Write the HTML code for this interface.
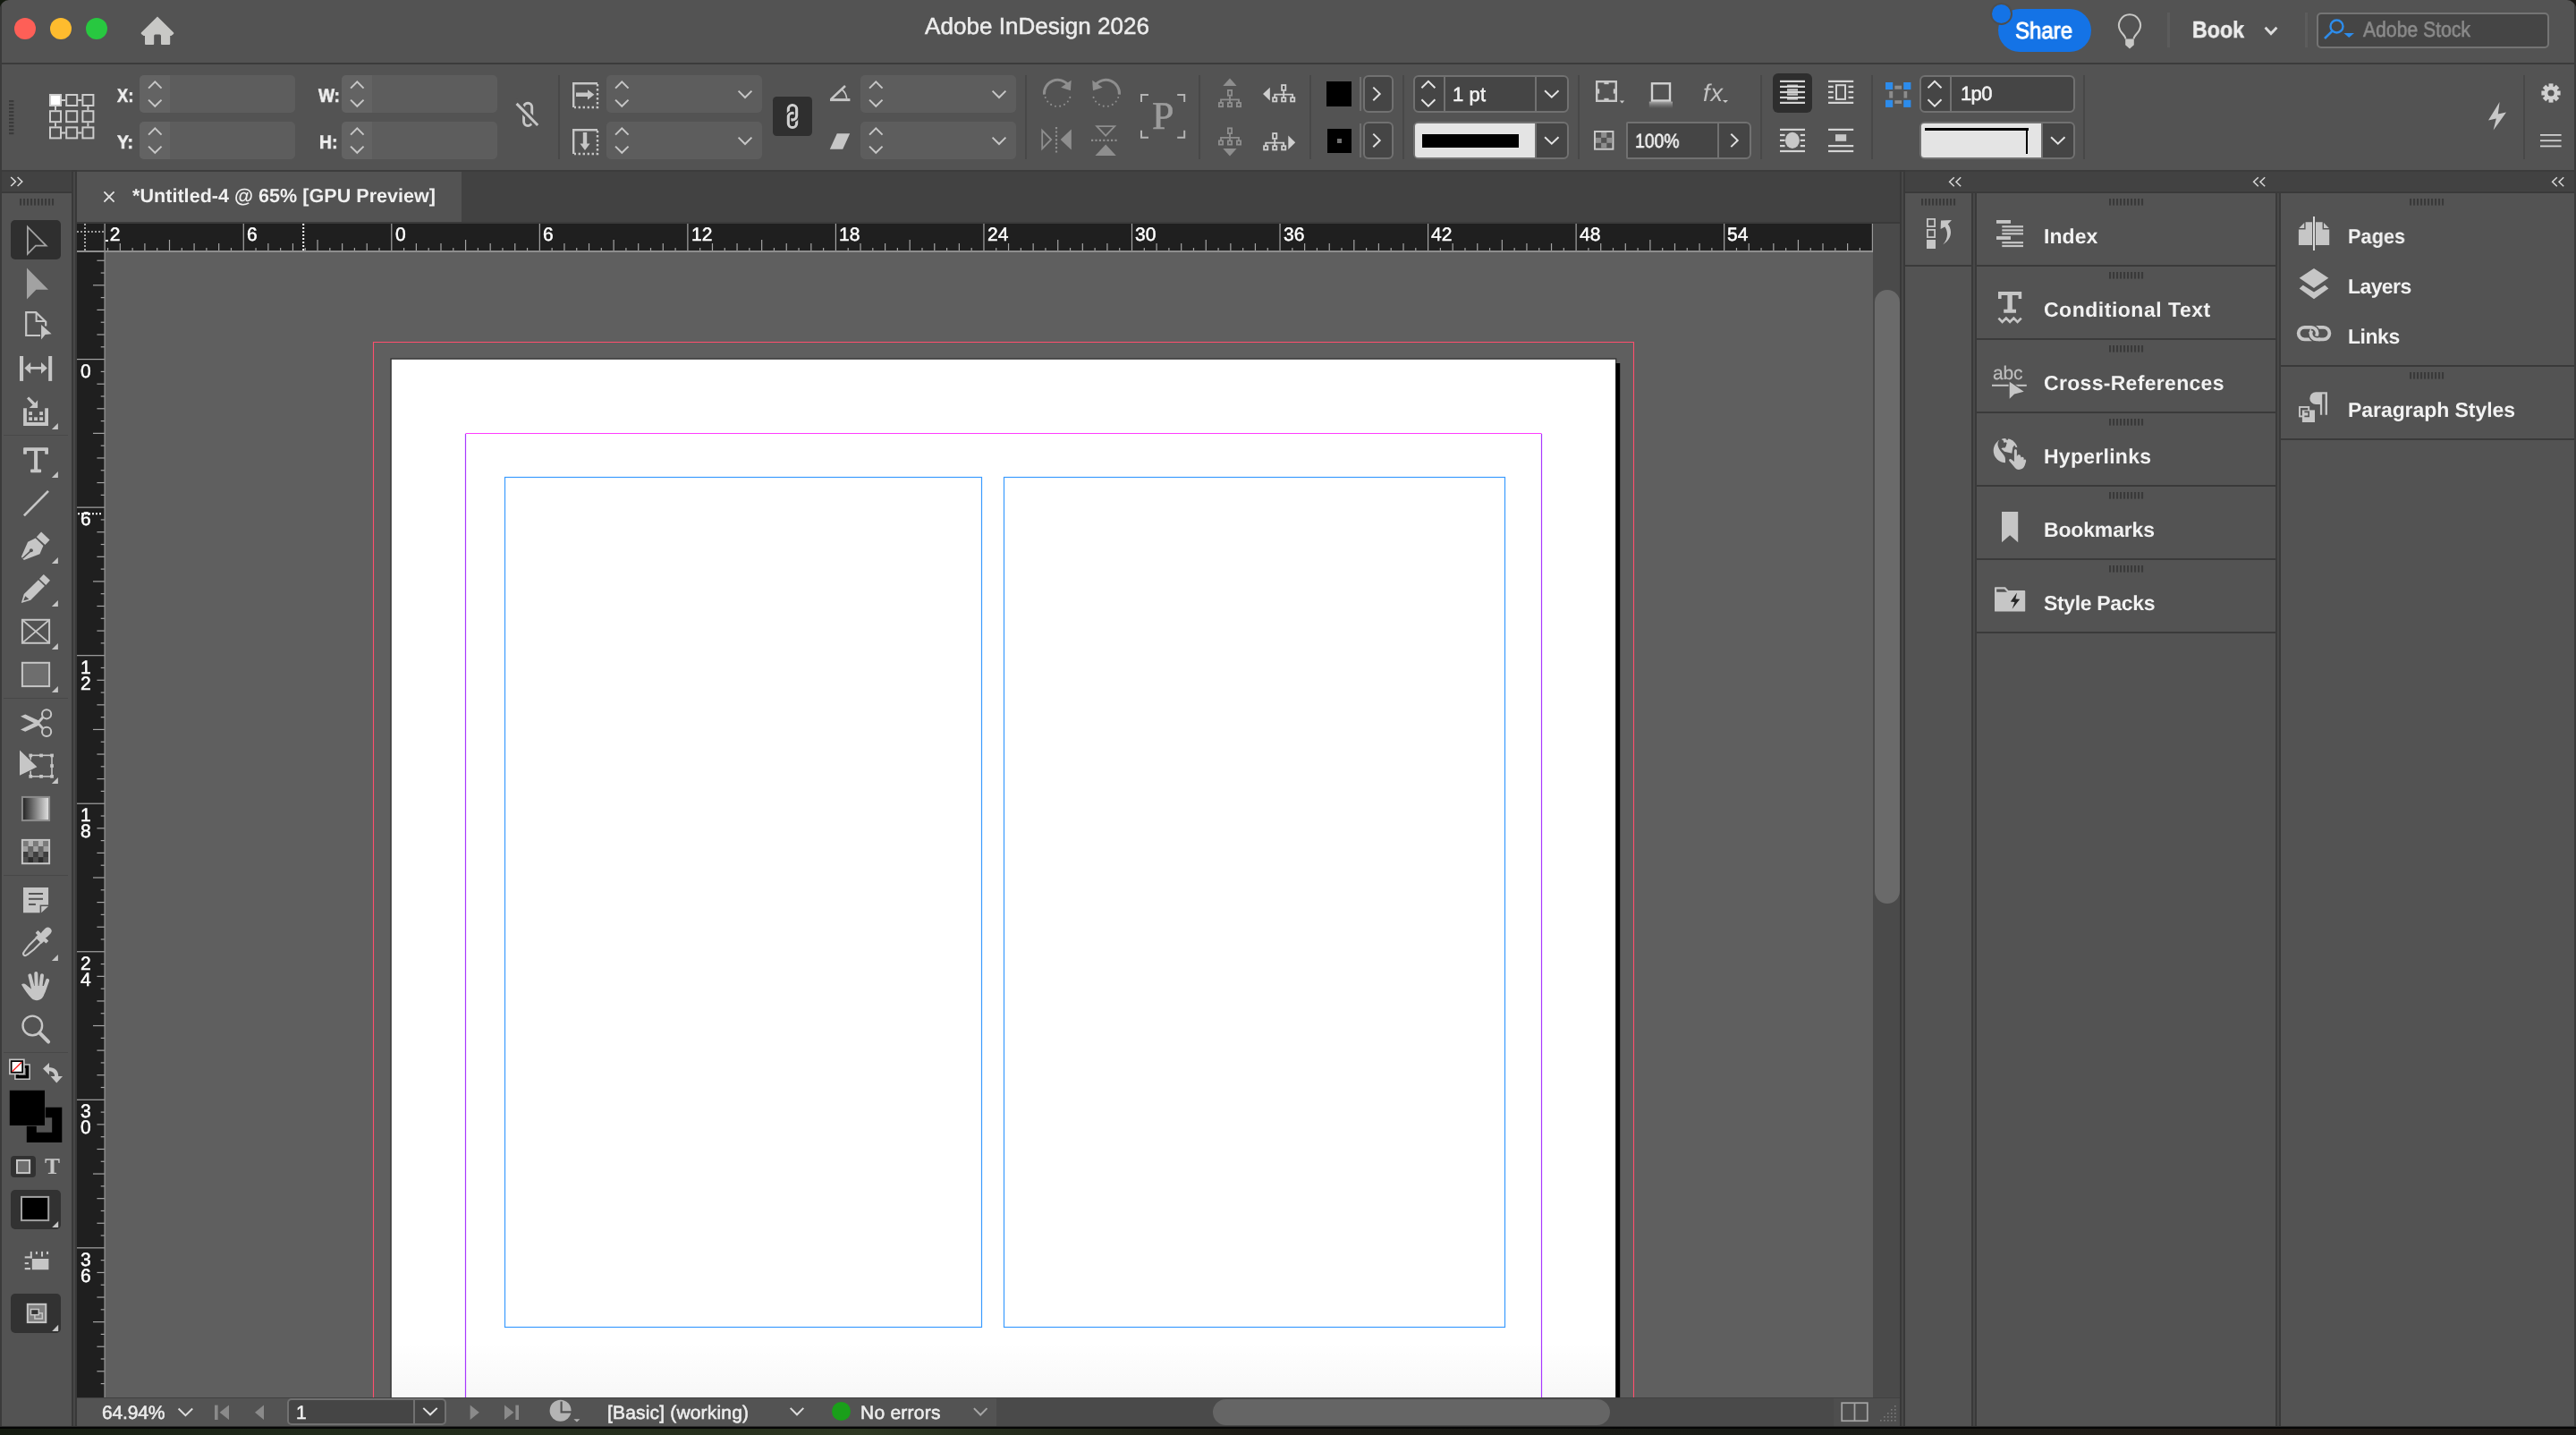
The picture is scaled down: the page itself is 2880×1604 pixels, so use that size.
<!DOCTYPE html>
<html lang="en"><head><meta charset="utf-8"><title>Adobe InDesign 2026</title>
<style>
html,body{margin:0;padding:0;}
body{width:2880px;height:1604px;overflow:hidden;background:linear-gradient(90deg,#141a10 0,#202a1a 350px,#262f1c 800px,#2e3822 960px,#252d1c 1100px,#1b1914 1400px,#171a15 2000px,#221c17 2500px,#1a1815 2880px);font-family:"Liberation Sans",sans-serif;position:relative;}
#win{position:absolute;left:0;top:0;width:2880px;height:1595px;background:#535353;border-radius:10px 10px 0 0;overflow:hidden;}
#win div,#win svg{position:absolute;box-sizing:border-box;}
#win svg{overflow:visible;}
.t{font-family:"Liberation Sans",sans-serif;will-change:transform;text-rendering:geometricPrecision;-webkit-text-stroke:0.55px;}
</style></head><body><div id="win">

<!-- title bar -->
<div style="left:0px;top:70px;width:2880px;height:2px;background:#3b3b3b;"></div>
<div style="left:15.7px;top:19.7px;width:24.6px;height:24.6px;background:#fe5f57;border-radius:50%;"></div>
<div style="left:55.7px;top:19.7px;width:24.6px;height:24.6px;background:#febc2e;border-radius:50%;"></div>
<div style="left:95.7px;top:19.7px;width:24.6px;height:24.6px;background:#28c840;border-radius:50%;"></div>
<svg style="left:150px;top:10px;" width="50" height="46" viewBox="0 0 50 46"><path d="M26 8.6 L44.2 26.6 Q44.6 27.3 44 27.9 L41.4 30 L40.2 30 L40.2 39 Q40.2 40 39.2 40 L31 40 Q30 40 30 39 L30 30 Q30 28.4 28.6 28.4 L23.6 28.4 Q22.2 28.4 22.2 30 L22.2 39 Q22.2 40 21.2 40 L13 40 Q12 40 12 39 L12 30 L10.6 30 L8 27.9 Q7.4 27.3 7.8 26.6 Z" fill="#c8c8c6"/></svg>
<div class="t" style="left:1034px;top:15.8px;font-size:26px;line-height:26px;color:#ececec;white-space:nowrap;letter-spacing:0.05px;-webkit-text-stroke:0.5px;">Adobe InDesign 2026</div>
<div style="left:2234px;top:10px;width:104px;height:48px;background:#1473e6;border-radius:24px;"></div>
<div style="left:2224.6px;top:2.8px;width:25px;height:25px;background:#1473e6;border-radius:50%;border:2.2px solid #4e4e4e;"></div>
<div class="t" style="left:2253.4px;top:21.2px;font-size:26px;line-height:26px;color:#ffffff;white-space:nowrap;transform:scaleX(0.9224);transform-origin:0 0;-webkit-text-stroke:0.9px;">Share</div>
<svg style="left:2364px;top:12px;" width="34" height="46" viewBox="0 0 34 46"><path d="M12.4 31.6 C12.4 28 8 25.6 6.2 21.6 A12 12 0 1 1 27.8 21.6 C26 25.6 21.6 28 21.6 31.6" fill="none" stroke="#c8c8c6" stroke-width="2"/><path d="M12.2 31.6 L21.8 31.6 L21.8 38.2 L17 42.4 L12.2 38.2 Z" fill="#c8c8c6"/></svg>
<div style="left:2422.5px;top:14px;width:3px;height:39px;background:#5c5c5c;"></div>
<div class="t" style="left:2450.5px;top:19.7px;font-size:26px;line-height:26px;color:#ececec;white-space:nowrap;font-weight:bold;transform:scaleX(0.8923);transform-origin:0 0;">Book</div>
<svg style="left:2529px;top:22px;" width="22" height="20" viewBox="0 0 22 20"><path d="M3.6 8.8 L10 15.6 L16.4 8.8" fill="none" stroke="#dcdcdc" stroke-width="2.9"/></svg>
<div style="left:2576.5px;top:14px;width:3px;height:39px;background:#5c5c5c;"></div>
<div style="left:2590px;top:14px;width:260px;height:39.5px;background:#454545;border:2px solid #747474;border-radius:5px;"></div>
<svg style="left:2596px;top:18px;" width="40" height="32" viewBox="0 0 40 32"><circle cx="16.5" cy="11.5" r="7" fill="none" stroke="#2d8ceb" stroke-width="2.4"/><path d="M11.6 16.6 L3 25" stroke="#2d8ceb" stroke-width="2.6" fill="none"/><path d="M24.5 19 L36 19 L30.2 24 Z" fill="#2d8ceb"/></svg>
<div class="t" style="left:2642px;top:21.9px;font-size:24px;line-height:24px;color:#8c8c8c;white-space:nowrap;transform:scaleX(0.8818);transform-origin:0 0;">Adobe Stock</div>
<!-- control bar -->
<div style="left:0px;top:190px;width:2880px;height:24px;background:#424242;"></div>
<svg style="left:10px;top:111.6px;" width="6" height="40" viewBox="0 0 6 40"><rect x="0" y="0" width="5.4" height="2.2" fill="#3a3a3a"/><rect x="0" y="4" width="5.4" height="2.2" fill="#3a3a3a"/><rect x="0" y="8" width="5.4" height="2.2" fill="#3a3a3a"/><rect x="0" y="12" width="5.4" height="2.2" fill="#3a3a3a"/><rect x="0" y="16" width="5.4" height="2.2" fill="#3a3a3a"/><rect x="0" y="20" width="5.4" height="2.2" fill="#3a3a3a"/><rect x="0" y="24" width="5.4" height="2.2" fill="#3a3a3a"/><rect x="0" y="28" width="5.4" height="2.2" fill="#3a3a3a"/><rect x="0" y="32" width="5.4" height="2.2" fill="#3a3a3a"/><rect x="0" y="36" width="5.4" height="2.2" fill="#3a3a3a"/></svg>
<svg style="left:54.8px;top:105px;" width="51" height="51" viewBox="0 0 51 51"><rect x="1.0" y="1.0" width="12" height="12" fill="#ffffff" stroke="#cdcdcd" stroke-width="2"/><rect x="19.2" y="1.0" width="12" height="12" fill="none" stroke="#cdcdcd" stroke-width="2"/><rect x="37.4" y="1.0" width="12" height="12" fill="none" stroke="#cdcdcd" stroke-width="2"/><rect x="1.0" y="19.2" width="12" height="12" fill="none" stroke="#cdcdcd" stroke-width="2"/><rect x="19.2" y="19.2" width="12" height="12" fill="none" stroke="#cdcdcd" stroke-width="2"/><rect x="37.4" y="19.2" width="12" height="12" fill="none" stroke="#cdcdcd" stroke-width="2"/><rect x="1.0" y="37.4" width="12" height="12" fill="none" stroke="#cdcdcd" stroke-width="2"/><rect x="19.2" y="37.4" width="12" height="12" fill="none" stroke="#cdcdcd" stroke-width="2"/><rect x="37.4" y="37.4" width="12" height="12" fill="none" stroke="#cdcdcd" stroke-width="2"/><path d="M14 7 L18.2 7" stroke="#cdcdcd" stroke-width="2"/><path d="M32.2 7 L36.4 7" stroke="#cdcdcd" stroke-width="2"/><path d="M14 43.4 L18.2 43.4" stroke="#cdcdcd" stroke-width="2"/><path d="M32.2 43.4 L36.4 43.4" stroke="#cdcdcd" stroke-width="2"/><path d="M7 14 L7 18.2" stroke="#cdcdcd" stroke-width="2"/><path d="M7 32.2 L7 36.4" stroke="#cdcdcd" stroke-width="2"/><path d="M43.4 14 L43.4 18.2" stroke="#cdcdcd" stroke-width="2"/><path d="M43.4 32.2 L43.4 36.4" stroke="#cdcdcd" stroke-width="2"/></svg>
<div class="t" style="left:130.5px;top:96.5px;font-size:21.2px;line-height:21.2px;color:#f0f0f0;white-space:nowrap;font-weight:bold;transform:scaleX(0.8585);transform-origin:0 0;">X:</div>
<div class="t" style="left:130.5px;top:149.2px;font-size:21.2px;line-height:21.2px;color:#f0f0f0;white-space:nowrap;font-weight:bold;transform:scaleX(0.9172);transform-origin:0 0;">Y:</div>
<div style="left:156px;top:84px;width:174px;height:42px;background:#5d5d5d;border-radius:5px;"></div>
<div style="left:156px;top:84px;width:34px;height:42px;background:#636363;border-radius:5px 0 0 5px;"></div>
<svg style="left:156px;top:84px;" width="174" height="42" viewBox="0 0 174 42"><path d="M10.05 14.6 L17.3 7.4 L24.55 14.6" fill="none" stroke="#c6c6c6" stroke-width="2"/><path d="M10.05 27.599999999999998 L17.3 34.8 L24.55 27.599999999999998" fill="none" stroke="#c6c6c6" stroke-width="2"/></svg>
<div style="left:156px;top:136px;width:174px;height:42px;background:#5d5d5d;border-radius:5px;"></div>
<div style="left:156px;top:136px;width:34px;height:42px;background:#636363;border-radius:5px 0 0 5px;"></div>
<svg style="left:156px;top:136px;" width="174" height="42" viewBox="0 0 174 42"><path d="M10.05 14.6 L17.3 7.4 L24.55 14.6" fill="none" stroke="#c6c6c6" stroke-width="2"/><path d="M10.05 27.599999999999998 L17.3 34.8 L24.55 27.599999999999998" fill="none" stroke="#c6c6c6" stroke-width="2"/></svg>
<div class="t" style="left:355.5px;top:96.5px;font-size:21.2px;line-height:21.2px;color:#f0f0f0;white-space:nowrap;font-weight:bold;transform:scaleX(0.8994);transform-origin:0 0;">W:</div>
<div class="t" style="left:357px;top:149.2px;font-size:21.2px;line-height:21.2px;color:#f0f0f0;white-space:nowrap;font-weight:bold;transform:scaleX(0.9121);transform-origin:0 0;">H:</div>
<div style="left:382px;top:84px;width:174px;height:42px;background:#5d5d5d;border-radius:5px;"></div>
<div style="left:382px;top:84px;width:34px;height:42px;background:#636363;border-radius:5px 0 0 5px;"></div>
<svg style="left:382px;top:84px;" width="174" height="42" viewBox="0 0 174 42"><path d="M10.05 14.6 L17.3 7.4 L24.55 14.6" fill="none" stroke="#c6c6c6" stroke-width="2"/><path d="M10.05 27.599999999999998 L17.3 34.8 L24.55 27.599999999999998" fill="none" stroke="#c6c6c6" stroke-width="2"/></svg>
<div style="left:382px;top:136px;width:174px;height:42px;background:#5d5d5d;border-radius:5px;"></div>
<div style="left:382px;top:136px;width:34px;height:42px;background:#636363;border-radius:5px 0 0 5px;"></div>
<svg style="left:382px;top:136px;" width="174" height="42" viewBox="0 0 174 42"><path d="M10.05 14.6 L17.3 7.4 L24.55 14.6" fill="none" stroke="#c6c6c6" stroke-width="2"/><path d="M10.05 27.599999999999998 L17.3 34.8 L24.55 27.599999999999998" fill="none" stroke="#c6c6c6" stroke-width="2"/></svg>
<svg style="left:572px;top:108px;" width="36" height="40" viewBox="0 0 36 40"><rect x="13.6" y="7.2" width="9.1" height="25.4" rx="4.55" fill="none" stroke="#c6c6c6" stroke-width="2.9"/><path d="M3 5.2 L31 33.8" stroke="#535353" stroke-width="7.8"/><path d="M5.6 7.9 L29.2 32" stroke="#c6c6c6" stroke-width="3"/></svg>
<div style="left:623.5px;top:84px;width:2px;height:94px;background:#484848;"></div>
<svg style="left:638px;top:90px;" width="34" height="34" viewBox="0 0 34 34"><path d="M3.2 30 L3.2 3.2 L30 3.2" fill="none" stroke="#c6c6c6" stroke-width="2.4"/><path d="M30 4 L30 30 L4 30" fill="none" stroke="#c6c6c6" stroke-width="2.4" stroke-dasharray="2.4 2.6"/><path d="M6 13.6 L19 13.6 L19 10.2 L26.4 15.8 L19 21.4 L19 18 L6 18 Z" fill="#c6c6c6"/></svg>
<svg style="left:638px;top:142px;" width="34" height="34" viewBox="0 0 34 34"><path d="M3.2 30 L3.2 3.2 L30 3.2" fill="none" stroke="#c6c6c6" stroke-width="2.4"/><path d="M30 4 L30 30 L4 30" fill="none" stroke="#c6c6c6" stroke-width="2.4" stroke-dasharray="2.4 2.6"/><path d="M13.8 6 L13.8 18.6 L10.4 18.6 L16 26 L21.6 18.6 L18.2 18.6 L18.2 6 Z" fill="#c6c6c6"/></svg>
<div style="left:678px;top:84px;width:174px;height:42px;background:#5d5d5d;border-radius:5px;"></div>
<svg style="left:678px;top:84px;" width="174" height="42" viewBox="0 0 174 42"><path d="M10.05 14.6 L17.3 7.4 L24.55 14.6" fill="none" stroke="#c6c6c6" stroke-width="2"/><path d="M10.05 27.599999999999998 L17.3 34.8 L24.55 27.599999999999998" fill="none" stroke="#c6c6c6" stroke-width="2"/><path d="M147.6 17.6 L155 25.0 L162.4 17.6" fill="none" stroke="#c6c6c6" stroke-width="2"/></svg>
<div style="left:678px;top:136px;width:174px;height:42px;background:#5d5d5d;border-radius:5px;"></div>
<svg style="left:678px;top:136px;" width="174" height="42" viewBox="0 0 174 42"><path d="M10.05 14.6 L17.3 7.4 L24.55 14.6" fill="none" stroke="#c6c6c6" stroke-width="2"/><path d="M10.05 27.599999999999998 L17.3 34.8 L24.55 27.599999999999998" fill="none" stroke="#c6c6c6" stroke-width="2"/><path d="M147.6 17.6 L155 25.0 L162.4 17.6" fill="none" stroke="#c6c6c6" stroke-width="2"/></svg>
<div style="left:864px;top:107.9px;width:44px;height:44.1px;background:#2f2f2f;border-radius:4.5px;"></div>
<svg style="left:864px;top:108px;" width="44" height="44" viewBox="0 0 44 44"><rect x="17.35" y="9.45" width="9.3" height="16.5" rx="4.65" fill="none" stroke="#d0d0d0" stroke-width="3.1"/><rect x="17.35" y="18.25" width="9.3" height="16.3" rx="4.65" fill="none" stroke="#2f2f2f" stroke-width="6"/><rect x="17.35" y="18.25" width="9.3" height="16.3" rx="4.65" fill="none" stroke="#d0d0d0" stroke-width="3.1"/><path d="M22 9.45 A4.65 4.65 0 0 1 26.65 14.1 L26.65 21.3 A4.65 4.65 0 0 1 22 25.95" fill="none" stroke="#2f2f2f" stroke-width="6"/><path d="M21 9.45 L22 9.45 A4.65 4.65 0 0 1 26.65 14.1 L26.65 21.3 A4.65 4.65 0 0 1 22 25.95 L21 25.95" fill="none" stroke="#d0d0d0" stroke-width="3.1"/></svg>
<svg style="left:926px;top:92px;" width="28" height="24" viewBox="0 0 28 24"><path d="M2 19.6 L24.4 19.6" stroke="#c6c6c6" stroke-width="3"/><path d="M3.4 18.6 L19 4" stroke="#c6c6c6" stroke-width="2.6"/><path d="M15.6 8.4 A14 14 0 0 1 20.6 18" fill="none" stroke="#c6c6c6" stroke-width="1.6"/></svg>
<svg style="left:926px;top:147px;" width="28" height="22" viewBox="0 0 28 22"><path d="M9.8 2.2 L24.2 2.2 L16.2 19.8 L1.8 19.8 Z" fill="#c6c6c6"/></svg>
<div style="left:962px;top:84px;width:174px;height:42px;background:#5d5d5d;border-radius:5px;"></div>
<svg style="left:962px;top:84px;" width="174" height="42" viewBox="0 0 174 42"><path d="M10.05 14.6 L17.3 7.4 L24.55 14.6" fill="none" stroke="#c6c6c6" stroke-width="2"/><path d="M10.05 27.599999999999998 L17.3 34.8 L24.55 27.599999999999998" fill="none" stroke="#c6c6c6" stroke-width="2"/><path d="M147.6 17.6 L155 25.0 L162.4 17.6" fill="none" stroke="#c6c6c6" stroke-width="2"/></svg>
<div style="left:962px;top:136px;width:174px;height:42px;background:#5d5d5d;border-radius:5px;"></div>
<svg style="left:962px;top:136px;" width="174" height="42" viewBox="0 0 174 42"><path d="M10.05 14.6 L17.3 7.4 L24.55 14.6" fill="none" stroke="#c6c6c6" stroke-width="2"/><path d="M10.05 27.599999999999998 L17.3 34.8 L24.55 27.599999999999998" fill="none" stroke="#c6c6c6" stroke-width="2"/><path d="M147.6 17.6 L155 25.0 L162.4 17.6" fill="none" stroke="#c6c6c6" stroke-width="2"/></svg>
<div style="left:1146px;top:84px;width:2px;height:94px;background:#484848;"></div>
<svg style="left:1160px;top:84px;" width="100" height="96" viewBox="0 0 100 96"><path d="M7.46 21.72 A15.1 15.1 0 0 1 34.40 11.10" fill="none" stroke="#8e8e8e" stroke-width="3"/><path d="M26.20 13.80 L37.70 5.80 L36.90 17.20 Z" fill="#8e8e8e"/><circle cx="36.29" cy="24.88" r="1.05" fill="#8e8e8e"/><circle cx="33.85" cy="29.43" r="1.05" fill="#8e8e8e"/><circle cx="29.97" cy="32.83" r="1.05" fill="#8e8e8e"/><circle cx="25.14" cy="34.66" r="1.05" fill="#8e8e8e"/><circle cx="19.98" cy="34.68" r="1.05" fill="#8e8e8e"/><circle cx="15.14" cy="32.89" r="1.05" fill="#8e8e8e"/><circle cx="11.23" cy="29.53" r="1.05" fill="#8e8e8e"/><circle cx="8.75" cy="25.00" r="1.05" fill="#8e8e8e"/><g transform="translate(152.8 0) scale(-1 1)"><path d="M61.36 21.72 A15.1 15.1 0 0 1 88.30 11.10" fill="none" stroke="#8e8e8e" stroke-width="3"/><path d="M80.10 13.80 L91.60 5.80 L90.80 17.20 Z" fill="#8e8e8e"/><circle cx="90.19" cy="24.88" r="1.05" fill="#8e8e8e"/><circle cx="87.75" cy="29.43" r="1.05" fill="#8e8e8e"/><circle cx="83.87" cy="32.83" r="1.05" fill="#8e8e8e"/><circle cx="79.04" cy="34.66" r="1.05" fill="#8e8e8e"/><circle cx="73.88" cy="34.68" r="1.05" fill="#8e8e8e"/><circle cx="69.04" cy="32.89" r="1.05" fill="#8e8e8e"/><circle cx="65.13" cy="29.53" r="1.05" fill="#8e8e8e"/><circle cx="62.65" cy="25.00" r="1.05" fill="#8e8e8e"/></g><path d="M5.2 61.8 L5.2 82.2 L15.2 72 Z" fill="none" stroke="#8e8e8e" stroke-width="1.8"/><path d="M21 58 L21 88" stroke="#8e8e8e" stroke-width="2.2" stroke-dasharray="2.2 2.2"/><path d="M37.8 60.6 L37.8 83.4 L25.6 72 Z" fill="#8e8e8e"/><path d="M66.2 57.2 L86.2 57.2 L76.2 67.6 Z" fill="none" stroke="#8e8e8e" stroke-width="1.8"/><path d="M60 72.9 L90.4 72.9" stroke="#8e8e8e" stroke-width="2.2" stroke-dasharray="2.2 2.2"/><path d="M64.4 90 L87.8 90 L76.2 77.6 Z" fill="#8e8e8e"/></svg>
<svg style="left:1274.8px;top:105.2px;" width="51" height="51" viewBox="0 0 51 51"><path d="M1 9 L1 1 L9 1" fill="none" stroke="#b4b4b4" stroke-width="2"/><path d="M49.2 9 L49.2 1 L41.2 1" fill="none" stroke="#b4b4b4" stroke-width="2"/><path d="M1 40.8 L1 48.8 L9 48.8" fill="none" stroke="#b4b4b4" stroke-width="2"/><path d="M49.2 40.8 L49.2 48.8 L41.2 48.8" fill="none" stroke="#b4b4b4" stroke-width="2"/></svg>
<div class="t" style="left:1288.2px;top:107.5px;font-size:44px;line-height:44px;color:#9c9c9c;white-space:nowrap;font-family:'Liberation Serif',serif;">P</div>
<div style="left:1340px;top:84px;width:2px;height:94px;background:#484848;"></div>
<svg style="left:1355px;top:84px;" width="110" height="96" viewBox="0 0 110 96"><path d="M12.3 12 L27.6 12 L20 3.6 Z" fill="#8e8e8e"/><rect x="17.9" y="16.9" width="4.2" height="5.8" fill="none" stroke="#8e8e8e" stroke-width="1.8"/><path d="M20 23.6 L20 27.4 M10 31 L10 27.4 L30 27.4 L30 31 M20 27.4 L20 31" fill="none" stroke="#8e8e8e" stroke-width="1.8"/><rect x="7.9" y="31" width="4.2" height="4.2" fill="none" stroke="#8e8e8e" stroke-width="1.8"/><rect x="17.9" y="31" width="4.2" height="4.2" fill="none" stroke="#8e8e8e" stroke-width="1.8"/><rect x="27.9" y="31" width="4.2" height="4.2" fill="none" stroke="#8e8e8e" stroke-width="1.8"/><rect x="17.9" y="59.3" width="4.2" height="5.8" fill="none" stroke="#8e8e8e" stroke-width="1.8"/><path d="M20 66.0 L20 69.8 M10 73.4 L10 69.8 L30 69.8 L30 73.4 M20 69.8 L20 73.4" fill="none" stroke="#8e8e8e" stroke-width="1.8"/><rect x="7.9" y="73.4" width="4.2" height="4.2" fill="none" stroke="#8e8e8e" stroke-width="1.8"/><rect x="17.9" y="73.4" width="4.2" height="4.2" fill="none" stroke="#8e8e8e" stroke-width="1.8"/><rect x="27.9" y="73.4" width="4.2" height="4.2" fill="none" stroke="#8e8e8e" stroke-width="1.8"/><path d="M12.3 82 L27.6 82 L20 90.4 Z" fill="#8e8e8e"/><path d="M64.8 13.8 L64.8 28.4 L57 21.1 Z" fill="#cfcfcf"/><rect x="78.10000000000001" y="11.1" width="4.2" height="5.8" fill="none" stroke="#cfcfcf" stroke-width="1.8"/><path d="M80.2 17.799999999999997 L80.2 21.6 M70.2 25.2 L70.2 21.6 L90.2 21.6 L90.2 25.2 M80.2 21.6 L80.2 25.2" fill="none" stroke="#cfcfcf" stroke-width="1.8"/><rect x="68.10000000000001" y="25.2" width="4.2" height="4.2" fill="none" stroke="#cfcfcf" stroke-width="1.8"/><rect x="78.10000000000001" y="25.2" width="4.2" height="4.2" fill="none" stroke="#cfcfcf" stroke-width="1.8"/><rect x="88.10000000000001" y="25.2" width="4.2" height="4.2" fill="none" stroke="#cfcfcf" stroke-width="1.8"/><rect x="68.10000000000001" y="65.10000000000001" width="4.2" height="5.8" fill="none" stroke="#cfcfcf" stroke-width="1.8"/><path d="M70.2 71.8 L70.2 75.60000000000001 M60.2 79.2 L60.2 75.60000000000001 L80.2 75.60000000000001 L80.2 79.2 M70.2 75.60000000000001 L70.2 79.2" fill="none" stroke="#cfcfcf" stroke-width="1.8"/><rect x="58.1" y="79.2" width="4.2" height="4.2" fill="none" stroke="#cfcfcf" stroke-width="1.8"/><rect x="68.10000000000001" y="79.2" width="4.2" height="4.2" fill="none" stroke="#cfcfcf" stroke-width="1.8"/><rect x="78.10000000000001" y="79.2" width="4.2" height="4.2" fill="none" stroke="#cfcfcf" stroke-width="1.8"/><path d="M85.3 67.4 L85.3 83 L93.2 75.2 Z" fill="#cfcfcf"/></svg>
<div style="left:1464px;top:84px;width:2px;height:94px;background:#484848;"></div>
<div style="left:1482.8px;top:90.9px;width:28.2px;height:28px;background:#000;"></div>
<div style="left:1483.8px;top:144px;width:27.2px;height:27px;background:#000;"></div>
<div style="left:1495px;top:155px;width:5px;height:5px;background:#707070;"></div>
<div style="left:1520px;top:85.8px;width:1.8px;height:38.4px;background:#6e6e6e;"></div>
<div style="left:1524.3px;top:84.2px;width:33.7px;height:41.7px;background:#454545;border:2px solid #717171;border-radius:6px;"></div>
<svg style="left:1524.3px;top:84.2px;" width="34" height="42" viewBox="0 0 34 42"><path d="M11.3 13.599999999999998 L18.7 20.9 L11.3 28.2" fill="none" stroke="#e0e0e0" stroke-width="2"/></svg>
<div style="left:1520px;top:137.9px;width:1.8px;height:38.4px;background:#6e6e6e;"></div>
<div style="left:1524.3px;top:136.3px;width:33.7px;height:41.7px;background:#454545;border:2px solid #717171;border-radius:6px;"></div>
<svg style="left:1524.3px;top:136.3px;" width="34" height="42" viewBox="0 0 34 42"><path d="M11.3 13.599999999999998 L18.7 20.9 L11.3 28.2" fill="none" stroke="#e0e0e0" stroke-width="2"/></svg>
<div style="left:1567.6px;top:84px;width:2px;height:94px;background:#484848;"></div>
<div style="left:1580px;top:84.2px;width:174px;height:41.7px;background:#454545;border:2px solid #717171;border-radius:6px;"></div>
<div style="left:1613.8px;top:86px;width:2px;height:38px;background:#717171;"></div>
<div style="left:1716px;top:86px;width:2px;height:38px;background:#717171;"></div>
<svg style="left:1580px;top:84.2px;" width="174" height="42" viewBox="0 0 174 42"><path d="M9.399999999999999 14.3 L16.9 6.8999999999999995 L24.4 14.3" fill="none" stroke="#e4e4e4" stroke-width="2"/><path d="M9.399999999999999 27.3 L16.9 34.7 L24.4 27.3" fill="none" stroke="#e4e4e4" stroke-width="2"/><path d="M147.10000000000002 17.3 L154.8 24.7 L162.5 17.3" fill="none" stroke="#e4e4e4" stroke-width="2"/></svg>
<div class="t" style="left:1623.8px;top:94.5px;font-size:22px;line-height:22px;color:#f2f2f2;white-space:nowrap;letter-spacing:0.102px;">1 pt</div>
<div style="left:1580px;top:136.3px;width:174px;height:41.7px;background:#454545;border:2px solid #717171;border-radius:6px;"></div>
<div style="left:1582px;top:138.3px;width:134.6px;height:37.7px;background:#e4e4e4;border-radius:3px 0 0 3px;"></div>
<div style="left:1590px;top:150.2px;width:108px;height:14.6px;background:#000;"></div>
<div style="left:1716px;top:138px;width:2px;height:38px;background:#717171;"></div>
<svg style="left:1580px;top:136.3px;" width="174" height="42" viewBox="0 0 174 42"><path d="M147.10000000000002 17.3 L154.8 24.7 L162.5 17.3" fill="none" stroke="#e4e4e4" stroke-width="2"/></svg>
<div style="left:1763.6px;top:84px;width:2px;height:94px;background:#484848;"></div>
<svg style="left:1783.8px;top:89.9px;" width="34" height="28" viewBox="0 0 34 28"><rect x="1.2" y="1.2" width="21.6" height="21.6" fill="none" stroke="#c8c8c8" stroke-width="2.4"/><rect x="9.4" y="2" width="5.2" height="2.2" fill="#c8c8c8"/><rect x="9.4" y="19.8" width="5.2" height="2.2" fill="#c8c8c8"/><rect x="2" y="9.4" width="2.2" height="5.2" fill="#c8c8c8"/><rect x="19.8" y="9.4" width="2.2" height="5.2" fill="#c8c8c8"/><path d="M26.8 22.4 L32.2 22.4 L29.5 25.4 Z" fill="#c8c8c8"/></svg>
<svg style="left:1840px;top:88px" width="36" height="36" viewBox="0 0 36 36"><defs><linearGradient id="dsg" x1="0" y1="0" x2="0" y2="1"><stop offset="0" stop-color="#b0b0b0" stop-opacity="0.9"/><stop offset="1" stop-color="#8a8a8a" stop-opacity="0"/></linearGradient></defs><rect x="3.8" y="25.6" width="26.2" height="7.6" fill="url(#dsg)"/><rect x="7" y="5.3" width="20" height="19.2" fill="none" stroke="#d2d2d2" stroke-width="2.4"/></svg>
<div class="t" style="left:1903.5px;top:90.5px;font-size:27px;line-height:27px;color:#c2c2c2;white-space:nowrap;font-style:italic;letter-spacing:1.0px;-webkit-text-stroke:0;">fx</div>
<svg style="left:1926px;top:112.3px;" width="7" height="4" viewBox="0 0 7 4"><path d="M0 0 L6 0 L3 3 Z" fill="#c8c8c8"/></svg>
<svg style="left:1781.8px;top:146px;" width="23" height="22" viewBox="0 0 23 22"><rect x="1" y="1" width="20.4" height="19.7" fill="#535353" stroke="#c8c8c8" stroke-width="2"/><rect x="8.15" y="2.00" width="6.15" height="5.9" fill="#8e8e8e"/><rect x="2.00" y="7.90" width="6.15" height="5.9" fill="#8e8e8e"/><rect x="14.30" y="7.90" width="6.15" height="5.9" fill="#8e8e8e"/><rect x="8.15" y="13.80" width="6.15" height="5.9" fill="#8e8e8e"/></svg>
<div style="left:1818px;top:136.3px;width:139.6px;height:41.7px;background:#454545;border:2px solid #717171;border-radius:6px;border-radius:2px 6px 6px 2px;"></div>
<div style="left:1920px;top:138px;width:2px;height:38px;background:#717171;"></div>
<div class="t" style="left:1828px;top:146.6px;font-size:22px;line-height:22px;color:#f2f2f2;white-space:nowrap;transform:scaleX(0.8798);transform-origin:0 0;">100%</div>
<svg style="left:1922px;top:136.3px;" width="36" height="42" viewBox="0 0 36 42"><path d="M13.3 13.7 L20.7 20.9 L13.3 28.099999999999998" fill="none" stroke="#e0e0e0" stroke-width="2"/></svg>
<div style="left:1967.6px;top:84px;width:2px;height:94px;background:#484848;"></div>
<div style="left:1982.2px;top:82px;width:43.6px;height:44px;background:#2e2e2e;border-radius:6px;"></div>
<svg style="left:1982px;top:82px;" width="44" height="44" viewBox="0 0 44 44"><rect x="8" y="7.800000000000001" width="28" height="2.2" fill="#d4d4d4"/><rect x="8" y="13.8" width="28" height="2.2" fill="#d4d4d4"/><rect x="8" y="19.9" width="28" height="2.2" fill="#d4d4d4"/><rect x="8" y="25.9" width="28" height="2.2" fill="#d4d4d4"/><rect x="8" y="31.799999999999997" width="28" height="2.2" fill="#d4d4d4"/><rect x="16" y="11.8" width="12" height="18.4" fill="#2e2e2e"/><rect x="16" y="12.6" width="12" height="2" fill="#c4c4c4"/><rect x="16" y="17.2" width="12" height="2.6" fill="#c4c4c4"/><rect x="16" y="22.2" width="12" height="2.6" fill="#c4c4c4"/><rect x="16" y="27.4" width="12" height="2.2" fill="#c4c4c4"/><rect x="16" y="14.0" width="12" height="1.8" fill="#e6e6e6"/><rect x="16" y="20.1" width="12" height="1.8" fill="#e6e6e6"/><rect x="16" y="26.1" width="12" height="1.8" fill="#e6e6e6"/></svg>
<svg style="left:2044px;top:82px;" width="30" height="44" viewBox="0 0 30 44"><rect x="0" y="7.800000000000001" width="28.2" height="2.2" fill="#d4d4d4"/><rect x="0" y="31.799999999999997" width="28.2" height="2.2" fill="#d4d4d4"/><rect x="0" y="13.8" width="5.7" height="2.2" fill="#d4d4d4"/><rect x="22.5" y="13.8" width="5.699999999999999" height="2.2" fill="#d4d4d4"/><rect x="0" y="19.9" width="5.7" height="2.2" fill="#d4d4d4"/><rect x="22.5" y="19.9" width="5.699999999999999" height="2.2" fill="#d4d4d4"/><rect x="0" y="25.9" width="5.7" height="2.2" fill="#d4d4d4"/><rect x="22.5" y="25.9" width="5.699999999999999" height="2.2" fill="#d4d4d4"/><rect x="9" y="13.2" width="10" height="15.7" fill="none" stroke="#d4d4d4" stroke-width="2"/></svg>
<svg style="left:1982px;top:136px;" width="44" height="44" viewBox="0 0 44 44"><rect x="8" y="7.800000000000001" width="28" height="2.2" fill="#d4d4d4"/><rect x="8" y="31.9" width="28" height="2.2" fill="#d4d4d4"/><rect x="8" y="13.9" width="5.6" height="2.2" fill="#d4d4d4"/><rect x="30.8" y="13.9" width="5.199999999999999" height="2.2" fill="#d4d4d4"/><rect x="8" y="19.799999999999997" width="5.6" height="2.2" fill="#d4d4d4"/><rect x="30.8" y="19.799999999999997" width="5.199999999999999" height="2.2" fill="#d4d4d4"/><rect x="8" y="26.0" width="5.6" height="2.2" fill="#d4d4d4"/><rect x="30.8" y="26.0" width="5.199999999999999" height="2.2" fill="#d4d4d4"/><ellipse cx="21.9" cy="20.9" rx="8" ry="9.1" fill="#c8c8c8"/></svg>
<svg style="left:2044px;top:136px;" width="30" height="44" viewBox="0 0 30 44"><rect x="0" y="7.800000000000001" width="28.2" height="2.2" fill="#d4d4d4"/><rect x="0" y="26.0" width="28.2" height="2.2" fill="#d4d4d4"/><rect x="0" y="31.9" width="28.2" height="2.2" fill="#d4d4d4"/><rect x="8" y="14.2" width="12.2" height="7.6" fill="#c8c8c8"/></svg>
<div style="left:2091.6px;top:84px;width:2px;height:94px;background:#484848;"></div>
<svg style="left:2107.8px;top:92.1px;" width="29" height="28" viewBox="0 0 29 28"><rect x="0" y="0" width="8.2" height="8.1" fill="#2d8ceb"/><rect x="20.2" y="0" width="8.2" height="8.1" fill="#2d8ceb"/><rect x="0" y="19.8" width="8.2" height="8.1" fill="#2d8ceb"/><rect x="20.2" y="19.8" width="8.2" height="8.1" fill="#2d8ceb"/><rect x="10.3" y="3.7" width="7.8" height="4" fill="#8c8c8c"/><rect x="10.3" y="20.2" width="7.8" height="3.7" fill="#8c8c8c"/><rect x="4.2" y="10" width="4" height="7.6" fill="#8c8c8c"/><rect x="20.5" y="10" width="3.7" height="7.6" fill="#8c8c8c"/></svg>
<div style="left:2146px;top:84.2px;width:174px;height:41.7px;background:#454545;border:2px solid #717171;border-radius:6px;"></div>
<div style="left:2180px;top:86px;width:2px;height:38px;background:#717171;"></div>
<svg style="left:2146px;top:84.2px;" width="174" height="42" viewBox="0 0 174 42"><path d="M9.5 14.3 L17 6.8999999999999995 L24.5 14.3" fill="none" stroke="#e4e4e4" stroke-width="2"/><path d="M9.5 27.3 L17 34.7 L24.5 27.3" fill="none" stroke="#e4e4e4" stroke-width="2"/></svg>
<div class="t" style="left:2191.8px;top:93.5px;font-size:22px;line-height:22px;color:#f2f2f2;white-space:nowrap;letter-spacing:-0.652px;">1p0</div>
<div style="left:2146px;top:136.3px;width:174px;height:41.7px;background:#454545;border:2px solid #717171;border-radius:6px;"></div>
<div style="left:2148px;top:138.3px;width:134px;height:37.7px;background:#e4e4e4;border-radius:3px 0 0 3px;"></div>
<div style="left:2152px;top:143px;width:115.5px;height:2.6px;background:#000;"></div>
<div style="left:2264.9px;top:143px;width:2.6px;height:29.1px;background:#000;"></div>
<div style="left:2282px;top:138px;width:2px;height:38px;background:#717171;"></div>
<svg style="left:2146px;top:136.3px;" width="174" height="42" viewBox="0 0 174 42"><path d="M147.10000000000002 17.3 L154.8 24.7 L162.5 17.3" fill="none" stroke="#e4e4e4" stroke-width="2"/></svg>
<div style="left:2329.2px;top:84px;width:2px;height:94px;background:#484848;"></div>
<svg style="left:2778px;top:110px;" width="28" height="40" viewBox="0 0 28 40"><path d="M16.6 4 L4 24.4 L12.8 22.6 L9.6 35.6 L24 15.6 L14.8 17.4 Z" fill="#c8c8c8"/></svg>
<div style="left:2821px;top:84px;width:2px;height:94px;background:#484848;"></div>
<svg style="left:2840px;top:92px;" width="24" height="24" viewBox="0 0 24 24"><g transform="translate(12 12)"><rect x="-2.5" y="-10.6" width="5" height="5" fill="#d0d0d0" transform="rotate(0)"/><rect x="-2.5" y="-10.6" width="5" height="5" fill="#d0d0d0" transform="rotate(45)"/><rect x="-2.5" y="-10.6" width="5" height="5" fill="#d0d0d0" transform="rotate(90)"/><rect x="-2.5" y="-10.6" width="5" height="5" fill="#d0d0d0" transform="rotate(135)"/><rect x="-2.5" y="-10.6" width="5" height="5" fill="#d0d0d0" transform="rotate(180)"/><rect x="-2.5" y="-10.6" width="5" height="5" fill="#d0d0d0" transform="rotate(225)"/><rect x="-2.5" y="-10.6" width="5" height="5" fill="#d0d0d0" transform="rotate(270)"/><rect x="-2.5" y="-10.6" width="5" height="5" fill="#d0d0d0" transform="rotate(315)"/><circle r="5.6" fill="none" stroke="#d0d0d0" stroke-width="4"/></g></svg>
<svg style="left:2840px;top:149px;" width="24" height="16" viewBox="0 0 24 16"><rect x="0" y="1" width="23.6" height="1.8" fill="#cfcfcf"/><rect x="0" y="7.3" width="23.6" height="1.8" fill="#cfcfcf"/><rect x="0" y="13.5" width="23.6" height="1.8" fill="#cfcfcf"/></svg>
<!-- document window -->
<div style="left:0px;top:190px;width:2880px;height:2px;background:#3c3c3c;"></div>
<div style="left:86px;top:192px;width:2038px;height:56px;background:#424242;"></div>
<div style="left:86px;top:192px;width:430px;height:56px;background:#535353;"></div>
<div style="left:86px;top:247.6px;width:2038px;height:2.4px;background:#3a3a3a;"></div>
<svg style="left:114px;top:212px;" width="16" height="16" viewBox="0 0 16 16"><path d="M2.4 2.4 L13.6 13.6 M13.6 2.4 L2.4 13.6" stroke="#e4e4e4" stroke-width="1.8" fill="none"/></svg>
<div class="t" style="left:148px;top:209.25px;font-size:21.5px;line-height:21.5px;color:#f0f0f0;white-space:nowrap;font-weight:bold;letter-spacing:0.048px;-webkit-text-stroke:0;">*Untitled-4 @ 65% [GPU Preview]</div>
<div class="cv" style="left:86px;top:250px;width:2008px;height:1312px;background:#5f5f5f;overflow:hidden;"></div>
<svg style="left:86px;top:250px;overflow:hidden" width="2008" height="1312" viewBox="86 250 2008 1312"><rect x="437.6" y="401.6" width="1368.6" height="1300" fill="#ffffff"/><rect x="437.0" y="401.0" width="1369.8" height="1300" fill="none" stroke="#333" stroke-width="1.2"/><rect x="1806.6000000000001" y="406" width="4.6" height="1300" fill="#000"/><defs><linearGradient id="pgs" x1="0" y1="0" x2="0" y2="1"><stop offset="0" stop-color="#000" stop-opacity="0"/><stop offset="1" stop-color="#000" stop-opacity="0.03"/></linearGradient></defs><rect x="437.6" y="1500" width="1368.6" height="62" fill="url(#pgs)"/><path d="M417.5 1700 L417.5 382.5 L1826.5 382.5 L1826.5 1700" fill="none" stroke="#ff4f6e" stroke-width="1.1"/><path d="M520.5 484.5 L1723.5 484.5" stroke="#ff3cff" stroke-width="1.2"/><path d="M520.5 485 L520.5 1700 M1723.5 485 L1723.5 1700" stroke="#a838ff" stroke-width="1.2"/><rect x="564.5" y="533.5" width="533" height="950" fill="none" stroke="#3a9bff" stroke-width="1.2"/><rect x="1122.5" y="533.5" width="560" height="950" fill="none" stroke="#3a9bff" stroke-width="1.2"/></svg>
<svg style="left:86px;top:250px;overflow:hidden" width="2008" height="32" viewBox="86 250 2008 32"><rect x="86" y="250" width="2008" height="32" fill="#1f1f1f"/><rect x="119.91" y="277" width="1.2" height="3" fill="#a4a4a4"/><rect x="133.71" y="272" width="1.2" height="8" fill="#a4a4a4"/><rect x="147.51" y="277" width="1.2" height="3" fill="#a4a4a4"/><rect x="161.30" y="272" width="1.2" height="8" fill="#a4a4a4"/><rect x="175.09" y="277" width="1.2" height="3" fill="#a4a4a4"/><rect x="188.89" y="268" width="1.2" height="12" fill="#a4a4a4"/><rect x="202.69" y="277" width="1.2" height="3" fill="#a4a4a4"/><rect x="216.48" y="272" width="1.2" height="8" fill="#a4a4a4"/><rect x="230.28" y="277" width="1.2" height="3" fill="#a4a4a4"/><rect x="244.07" y="272" width="1.2" height="8" fill="#a4a4a4"/><rect x="257.87" y="277" width="1.2" height="3" fill="#a4a4a4"/><rect x="271.66" y="250" width="1.2" height="30" fill="#a4a4a4"/><rect x="285.45" y="277" width="1.2" height="3" fill="#a4a4a4"/><rect x="299.25" y="272" width="1.2" height="8" fill="#a4a4a4"/><rect x="313.04" y="277" width="1.2" height="3" fill="#a4a4a4"/><rect x="326.84" y="272" width="1.2" height="8" fill="#a4a4a4"/><rect x="340.63" y="277" width="1.2" height="3" fill="#a4a4a4"/><rect x="354.43" y="268" width="1.2" height="12" fill="#a4a4a4"/><rect x="368.23" y="277" width="1.2" height="3" fill="#a4a4a4"/><rect x="382.02" y="272" width="1.2" height="8" fill="#a4a4a4"/><rect x="395.81" y="277" width="1.2" height="3" fill="#a4a4a4"/><rect x="409.61" y="272" width="1.2" height="8" fill="#a4a4a4"/><rect x="423.40" y="277" width="1.2" height="3" fill="#a4a4a4"/><rect x="437.20" y="250" width="1.2" height="30" fill="#a4a4a4"/><rect x="451.00" y="277" width="1.2" height="3" fill="#a4a4a4"/><rect x="464.79" y="272" width="1.2" height="8" fill="#a4a4a4"/><rect x="478.58" y="277" width="1.2" height="3" fill="#a4a4a4"/><rect x="492.38" y="272" width="1.2" height="8" fill="#a4a4a4"/><rect x="506.17" y="277" width="1.2" height="3" fill="#a4a4a4"/><rect x="519.97" y="268" width="1.2" height="12" fill="#a4a4a4"/><rect x="533.76" y="277" width="1.2" height="3" fill="#a4a4a4"/><rect x="547.56" y="272" width="1.2" height="8" fill="#a4a4a4"/><rect x="561.36" y="277" width="1.2" height="3" fill="#a4a4a4"/><rect x="575.15" y="272" width="1.2" height="8" fill="#a4a4a4"/><rect x="588.95" y="277" width="1.2" height="3" fill="#a4a4a4"/><rect x="602.74" y="250" width="1.2" height="30" fill="#a4a4a4"/><rect x="616.53" y="277" width="1.2" height="3" fill="#a4a4a4"/><rect x="630.33" y="272" width="1.2" height="8" fill="#a4a4a4"/><rect x="644.12" y="277" width="1.2" height="3" fill="#a4a4a4"/><rect x="657.92" y="272" width="1.2" height="8" fill="#a4a4a4"/><rect x="671.72" y="277" width="1.2" height="3" fill="#a4a4a4"/><rect x="685.51" y="268" width="1.2" height="12" fill="#a4a4a4"/><rect x="699.30" y="277" width="1.2" height="3" fill="#a4a4a4"/><rect x="713.10" y="272" width="1.2" height="8" fill="#a4a4a4"/><rect x="726.89" y="277" width="1.2" height="3" fill="#a4a4a4"/><rect x="740.69" y="272" width="1.2" height="8" fill="#a4a4a4"/><rect x="754.49" y="277" width="1.2" height="3" fill="#a4a4a4"/><rect x="768.28" y="250" width="1.2" height="30" fill="#a4a4a4"/><rect x="782.07" y="277" width="1.2" height="3" fill="#a4a4a4"/><rect x="795.87" y="272" width="1.2" height="8" fill="#a4a4a4"/><rect x="809.66" y="277" width="1.2" height="3" fill="#a4a4a4"/><rect x="823.46" y="272" width="1.2" height="8" fill="#a4a4a4"/><rect x="837.25" y="277" width="1.2" height="3" fill="#a4a4a4"/><rect x="851.05" y="268" width="1.2" height="12" fill="#a4a4a4"/><rect x="864.84" y="277" width="1.2" height="3" fill="#a4a4a4"/><rect x="878.64" y="272" width="1.2" height="8" fill="#a4a4a4"/><rect x="892.44" y="277" width="1.2" height="3" fill="#a4a4a4"/><rect x="906.23" y="272" width="1.2" height="8" fill="#a4a4a4"/><rect x="920.02" y="277" width="1.2" height="3" fill="#a4a4a4"/><rect x="933.82" y="250" width="1.2" height="30" fill="#a4a4a4"/><rect x="947.62" y="277" width="1.2" height="3" fill="#a4a4a4"/><rect x="961.41" y="272" width="1.2" height="8" fill="#a4a4a4"/><rect x="975.21" y="277" width="1.2" height="3" fill="#a4a4a4"/><rect x="989.00" y="272" width="1.2" height="8" fill="#a4a4a4"/><rect x="1002.79" y="277" width="1.2" height="3" fill="#a4a4a4"/><rect x="1016.59" y="268" width="1.2" height="12" fill="#a4a4a4"/><rect x="1030.38" y="277" width="1.2" height="3" fill="#a4a4a4"/><rect x="1044.18" y="272" width="1.2" height="8" fill="#a4a4a4"/><rect x="1057.98" y="277" width="1.2" height="3" fill="#a4a4a4"/><rect x="1071.77" y="272" width="1.2" height="8" fill="#a4a4a4"/><rect x="1085.57" y="277" width="1.2" height="3" fill="#a4a4a4"/><rect x="1099.36" y="250" width="1.2" height="30" fill="#a4a4a4"/><rect x="1113.16" y="277" width="1.2" height="3" fill="#a4a4a4"/><rect x="1126.95" y="272" width="1.2" height="8" fill="#a4a4a4"/><rect x="1140.75" y="277" width="1.2" height="3" fill="#a4a4a4"/><rect x="1154.54" y="272" width="1.2" height="8" fill="#a4a4a4"/><rect x="1168.34" y="277" width="1.2" height="3" fill="#a4a4a4"/><rect x="1182.13" y="268" width="1.2" height="12" fill="#a4a4a4"/><rect x="1195.93" y="277" width="1.2" height="3" fill="#a4a4a4"/><rect x="1209.72" y="272" width="1.2" height="8" fill="#a4a4a4"/><rect x="1223.52" y="277" width="1.2" height="3" fill="#a4a4a4"/><rect x="1237.31" y="272" width="1.2" height="8" fill="#a4a4a4"/><rect x="1251.11" y="277" width="1.2" height="3" fill="#a4a4a4"/><rect x="1264.90" y="250" width="1.2" height="30" fill="#a4a4a4"/><rect x="1278.70" y="277" width="1.2" height="3" fill="#a4a4a4"/><rect x="1292.49" y="272" width="1.2" height="8" fill="#a4a4a4"/><rect x="1306.29" y="277" width="1.2" height="3" fill="#a4a4a4"/><rect x="1320.08" y="272" width="1.2" height="8" fill="#a4a4a4"/><rect x="1333.88" y="277" width="1.2" height="3" fill="#a4a4a4"/><rect x="1347.67" y="268" width="1.2" height="12" fill="#a4a4a4"/><rect x="1361.47" y="277" width="1.2" height="3" fill="#a4a4a4"/><rect x="1375.26" y="272" width="1.2" height="8" fill="#a4a4a4"/><rect x="1389.06" y="277" width="1.2" height="3" fill="#a4a4a4"/><rect x="1402.85" y="272" width="1.2" height="8" fill="#a4a4a4"/><rect x="1416.65" y="277" width="1.2" height="3" fill="#a4a4a4"/><rect x="1430.44" y="250" width="1.2" height="30" fill="#a4a4a4"/><rect x="1444.24" y="277" width="1.2" height="3" fill="#a4a4a4"/><rect x="1458.03" y="272" width="1.2" height="8" fill="#a4a4a4"/><rect x="1471.83" y="277" width="1.2" height="3" fill="#a4a4a4"/><rect x="1485.62" y="272" width="1.2" height="8" fill="#a4a4a4"/><rect x="1499.41" y="277" width="1.2" height="3" fill="#a4a4a4"/><rect x="1513.21" y="268" width="1.2" height="12" fill="#a4a4a4"/><rect x="1527.01" y="277" width="1.2" height="3" fill="#a4a4a4"/><rect x="1540.80" y="272" width="1.2" height="8" fill="#a4a4a4"/><rect x="1554.60" y="277" width="1.2" height="3" fill="#a4a4a4"/><rect x="1568.39" y="272" width="1.2" height="8" fill="#a4a4a4"/><rect x="1582.18" y="277" width="1.2" height="3" fill="#a4a4a4"/><rect x="1595.98" y="250" width="1.2" height="30" fill="#a4a4a4"/><rect x="1609.78" y="277" width="1.2" height="3" fill="#a4a4a4"/><rect x="1623.57" y="272" width="1.2" height="8" fill="#a4a4a4"/><rect x="1637.37" y="277" width="1.2" height="3" fill="#a4a4a4"/><rect x="1651.16" y="272" width="1.2" height="8" fill="#a4a4a4"/><rect x="1664.95" y="277" width="1.2" height="3" fill="#a4a4a4"/><rect x="1678.75" y="268" width="1.2" height="12" fill="#a4a4a4"/><rect x="1692.55" y="277" width="1.2" height="3" fill="#a4a4a4"/><rect x="1706.34" y="272" width="1.2" height="8" fill="#a4a4a4"/><rect x="1720.13" y="277" width="1.2" height="3" fill="#a4a4a4"/><rect x="1733.93" y="272" width="1.2" height="8" fill="#a4a4a4"/><rect x="1747.73" y="277" width="1.2" height="3" fill="#a4a4a4"/><rect x="1761.52" y="250" width="1.2" height="30" fill="#a4a4a4"/><rect x="1775.32" y="277" width="1.2" height="3" fill="#a4a4a4"/><rect x="1789.11" y="272" width="1.2" height="8" fill="#a4a4a4"/><rect x="1802.90" y="277" width="1.2" height="3" fill="#a4a4a4"/><rect x="1816.70" y="272" width="1.2" height="8" fill="#a4a4a4"/><rect x="1830.50" y="277" width="1.2" height="3" fill="#a4a4a4"/><rect x="1844.29" y="268" width="1.2" height="12" fill="#a4a4a4"/><rect x="1858.09" y="277" width="1.2" height="3" fill="#a4a4a4"/><rect x="1871.88" y="272" width="1.2" height="8" fill="#a4a4a4"/><rect x="1885.67" y="277" width="1.2" height="3" fill="#a4a4a4"/><rect x="1899.47" y="272" width="1.2" height="8" fill="#a4a4a4"/><rect x="1913.27" y="277" width="1.2" height="3" fill="#a4a4a4"/><rect x="1927.06" y="250" width="1.2" height="30" fill="#a4a4a4"/><rect x="1940.86" y="277" width="1.2" height="3" fill="#a4a4a4"/><rect x="1954.65" y="272" width="1.2" height="8" fill="#a4a4a4"/><rect x="1968.44" y="277" width="1.2" height="3" fill="#a4a4a4"/><rect x="1982.24" y="272" width="1.2" height="8" fill="#a4a4a4"/><rect x="1996.04" y="277" width="1.2" height="3" fill="#a4a4a4"/><rect x="2009.83" y="268" width="1.2" height="12" fill="#a4a4a4"/><rect x="2023.62" y="277" width="1.2" height="3" fill="#a4a4a4"/><rect x="2037.42" y="272" width="1.2" height="8" fill="#a4a4a4"/><rect x="2051.22" y="277" width="1.2" height="3" fill="#a4a4a4"/><rect x="2065.01" y="272" width="1.2" height="8" fill="#a4a4a4"/><rect x="2078.81" y="277" width="1.2" height="3" fill="#a4a4a4"/><rect x="86" y="280" width="2008" height="2" fill="#8e8e8e"/><rect x="2092.8" y="250" width="1.4" height="32" fill="#9a9a9a"/></svg>
<svg style="left:86px;top:250px;overflow:hidden" width="32" height="1312" viewBox="86 250 32 1312"><rect x="86" y="282" width="31.8" height="1280" fill="#1f1f1f"/><rect x="108.4" y="290.64" width="8.599999999999994" height="1.2" fill="#a4a4a4"/><rect x="112.7" y="304.44" width="4.299999999999997" height="1.2" fill="#a4a4a4"/><rect x="104" y="318.23" width="13" height="1.2" fill="#a4a4a4"/><rect x="112.7" y="332.02" width="4.299999999999997" height="1.2" fill="#a4a4a4"/><rect x="108.4" y="345.82" width="8.599999999999994" height="1.2" fill="#a4a4a4"/><rect x="112.7" y="359.62" width="4.299999999999997" height="1.2" fill="#a4a4a4"/><rect x="108.4" y="373.41" width="8.599999999999994" height="1.2" fill="#a4a4a4"/><rect x="112.7" y="387.20" width="4.299999999999997" height="1.2" fill="#a4a4a4"/><rect x="86" y="401.00" width="31" height="1.2" fill="#a4a4a4"/><rect x="112.7" y="414.80" width="4.299999999999997" height="1.2" fill="#a4a4a4"/><rect x="108.4" y="428.59" width="8.599999999999994" height="1.2" fill="#a4a4a4"/><rect x="112.7" y="442.38" width="4.299999999999997" height="1.2" fill="#a4a4a4"/><rect x="108.4" y="456.18" width="8.599999999999994" height="1.2" fill="#a4a4a4"/><rect x="112.7" y="469.98" width="4.299999999999997" height="1.2" fill="#a4a4a4"/><rect x="104" y="483.77" width="13" height="1.2" fill="#a4a4a4"/><rect x="112.7" y="497.56" width="4.299999999999997" height="1.2" fill="#a4a4a4"/><rect x="108.4" y="511.36" width="8.599999999999994" height="1.2" fill="#a4a4a4"/><rect x="112.7" y="525.15" width="4.299999999999997" height="1.2" fill="#a4a4a4"/><rect x="108.4" y="538.95" width="8.599999999999994" height="1.2" fill="#a4a4a4"/><rect x="112.7" y="552.75" width="4.299999999999997" height="1.2" fill="#a4a4a4"/><rect x="86" y="566.54" width="31" height="1.2" fill="#a4a4a4"/><rect x="112.7" y="580.34" width="4.299999999999997" height="1.2" fill="#a4a4a4"/><rect x="108.4" y="594.13" width="8.599999999999994" height="1.2" fill="#a4a4a4"/><rect x="112.7" y="607.93" width="4.299999999999997" height="1.2" fill="#a4a4a4"/><rect x="108.4" y="621.72" width="8.599999999999994" height="1.2" fill="#a4a4a4"/><rect x="112.7" y="635.51" width="4.299999999999997" height="1.2" fill="#a4a4a4"/><rect x="104" y="649.31" width="13" height="1.2" fill="#a4a4a4"/><rect x="112.7" y="663.11" width="4.299999999999997" height="1.2" fill="#a4a4a4"/><rect x="108.4" y="676.90" width="8.599999999999994" height="1.2" fill="#a4a4a4"/><rect x="112.7" y="690.70" width="4.299999999999997" height="1.2" fill="#a4a4a4"/><rect x="108.4" y="704.49" width="8.599999999999994" height="1.2" fill="#a4a4a4"/><rect x="112.7" y="718.28" width="4.299999999999997" height="1.2" fill="#a4a4a4"/><rect x="86" y="732.08" width="31" height="1.2" fill="#a4a4a4"/><rect x="112.7" y="745.88" width="4.299999999999997" height="1.2" fill="#a4a4a4"/><rect x="108.4" y="759.67" width="8.599999999999994" height="1.2" fill="#a4a4a4"/><rect x="112.7" y="773.47" width="4.299999999999997" height="1.2" fill="#a4a4a4"/><rect x="108.4" y="787.26" width="8.599999999999994" height="1.2" fill="#a4a4a4"/><rect x="112.7" y="801.05" width="4.299999999999997" height="1.2" fill="#a4a4a4"/><rect x="104" y="814.85" width="13" height="1.2" fill="#a4a4a4"/><rect x="112.7" y="828.64" width="4.299999999999997" height="1.2" fill="#a4a4a4"/><rect x="108.4" y="842.44" width="8.599999999999994" height="1.2" fill="#a4a4a4"/><rect x="112.7" y="856.24" width="4.299999999999997" height="1.2" fill="#a4a4a4"/><rect x="108.4" y="870.03" width="8.599999999999994" height="1.2" fill="#a4a4a4"/><rect x="112.7" y="883.82" width="4.299999999999997" height="1.2" fill="#a4a4a4"/><rect x="86" y="897.62" width="31" height="1.2" fill="#a4a4a4"/><rect x="112.7" y="911.42" width="4.299999999999997" height="1.2" fill="#a4a4a4"/><rect x="108.4" y="925.21" width="8.599999999999994" height="1.2" fill="#a4a4a4"/><rect x="112.7" y="939.00" width="4.299999999999997" height="1.2" fill="#a4a4a4"/><rect x="108.4" y="952.80" width="8.599999999999994" height="1.2" fill="#a4a4a4"/><rect x="112.7" y="966.60" width="4.299999999999997" height="1.2" fill="#a4a4a4"/><rect x="104" y="980.39" width="13" height="1.2" fill="#a4a4a4"/><rect x="112.7" y="994.18" width="4.299999999999997" height="1.2" fill="#a4a4a4"/><rect x="108.4" y="1007.98" width="8.599999999999994" height="1.2" fill="#a4a4a4"/><rect x="112.7" y="1021.77" width="4.299999999999997" height="1.2" fill="#a4a4a4"/><rect x="108.4" y="1035.57" width="8.599999999999994" height="1.2" fill="#a4a4a4"/><rect x="112.7" y="1049.37" width="4.299999999999997" height="1.2" fill="#a4a4a4"/><rect x="86" y="1063.16" width="31" height="1.2" fill="#a4a4a4"/><rect x="112.7" y="1076.96" width="4.299999999999997" height="1.2" fill="#a4a4a4"/><rect x="108.4" y="1090.75" width="8.599999999999994" height="1.2" fill="#a4a4a4"/><rect x="112.7" y="1104.55" width="4.299999999999997" height="1.2" fill="#a4a4a4"/><rect x="108.4" y="1118.34" width="8.599999999999994" height="1.2" fill="#a4a4a4"/><rect x="112.7" y="1132.14" width="4.299999999999997" height="1.2" fill="#a4a4a4"/><rect x="104" y="1145.93" width="13" height="1.2" fill="#a4a4a4"/><rect x="112.7" y="1159.73" width="4.299999999999997" height="1.2" fill="#a4a4a4"/><rect x="108.4" y="1173.52" width="8.599999999999994" height="1.2" fill="#a4a4a4"/><rect x="112.7" y="1187.32" width="4.299999999999997" height="1.2" fill="#a4a4a4"/><rect x="108.4" y="1201.11" width="8.599999999999994" height="1.2" fill="#a4a4a4"/><rect x="112.7" y="1214.91" width="4.299999999999997" height="1.2" fill="#a4a4a4"/><rect x="86" y="1228.70" width="31" height="1.2" fill="#a4a4a4"/><rect x="112.7" y="1242.50" width="4.299999999999997" height="1.2" fill="#a4a4a4"/><rect x="108.4" y="1256.29" width="8.599999999999994" height="1.2" fill="#a4a4a4"/><rect x="112.7" y="1270.09" width="4.299999999999997" height="1.2" fill="#a4a4a4"/><rect x="108.4" y="1283.88" width="8.599999999999994" height="1.2" fill="#a4a4a4"/><rect x="112.7" y="1297.68" width="4.299999999999997" height="1.2" fill="#a4a4a4"/><rect x="104" y="1311.47" width="13" height="1.2" fill="#a4a4a4"/><rect x="112.7" y="1325.27" width="4.299999999999997" height="1.2" fill="#a4a4a4"/><rect x="108.4" y="1339.06" width="8.599999999999994" height="1.2" fill="#a4a4a4"/><rect x="112.7" y="1352.86" width="4.299999999999997" height="1.2" fill="#a4a4a4"/><rect x="108.4" y="1366.65" width="8.599999999999994" height="1.2" fill="#a4a4a4"/><rect x="112.7" y="1380.45" width="4.299999999999997" height="1.2" fill="#a4a4a4"/><rect x="86" y="1394.24" width="31" height="1.2" fill="#a4a4a4"/><rect x="112.7" y="1408.04" width="4.299999999999997" height="1.2" fill="#a4a4a4"/><rect x="108.4" y="1421.83" width="8.599999999999994" height="1.2" fill="#a4a4a4"/><rect x="112.7" y="1435.62" width="4.299999999999997" height="1.2" fill="#a4a4a4"/><rect x="108.4" y="1449.42" width="8.599999999999994" height="1.2" fill="#a4a4a4"/><rect x="112.7" y="1463.22" width="4.299999999999997" height="1.2" fill="#a4a4a4"/><rect x="104" y="1477.01" width="13" height="1.2" fill="#a4a4a4"/><rect x="112.7" y="1490.81" width="4.299999999999997" height="1.2" fill="#a4a4a4"/><rect x="108.4" y="1504.60" width="8.599999999999994" height="1.2" fill="#a4a4a4"/><rect x="112.7" y="1518.39" width="4.299999999999997" height="1.2" fill="#a4a4a4"/><rect x="108.4" y="1532.19" width="8.599999999999994" height="1.2" fill="#a4a4a4"/><rect x="112.7" y="1545.99" width="4.299999999999997" height="1.2" fill="#a4a4a4"/><rect x="116.4" y="250" width="1.5" height="1312" fill="#8e8e8e"/></svg>
<div style="left:86px;top:250px;width:30.4px;height:30px;background:#1f1f1f;"></div>
<svg style="left:86px;top:250px;" width="31" height="30" viewBox="0 0 31 30"><path d="M9 0 L9 30" stroke="#c8c8c8" stroke-width="1.6" stroke-dasharray="2 2"/><path d="M0 9 L30 9" stroke="#c8c8c8" stroke-width="1.6" stroke-dasharray="2 2"/></svg>
<div style="left:117.9px;top:250px;width:40px;height:30px;overflow:hidden;"><div class="t" style="position:absolute;left:-6.6px;top:2px;font-size:21px;line-height:21px;color:#fff;-webkit-text-stroke:0.5px;clip-path:inset(0 0 0 11px);">12</div></div>
<div style="left:118px;top:267.6px;width:2.6px;height:2.2px;background:#ffffff;"></div>
<div class="t" style="left:276.06px;top:251.8px;font-size:21px;line-height:21px;color:#ffffff;white-space:nowrap;-webkit-text-stroke:0.5px;">6</div>
<div class="t" style="left:441.6px;top:251.8px;font-size:21px;line-height:21px;color:#ffffff;white-space:nowrap;-webkit-text-stroke:0.5px;">0</div>
<div class="t" style="left:607.14px;top:251.8px;font-size:21px;line-height:21px;color:#ffffff;white-space:nowrap;-webkit-text-stroke:0.5px;">6</div>
<div class="t" style="left:772.68px;top:251.8px;font-size:21px;line-height:21px;color:#ffffff;white-space:nowrap;-webkit-text-stroke:0.5px;">12</div>
<div class="t" style="left:938.22px;top:251.8px;font-size:21px;line-height:21px;color:#ffffff;white-space:nowrap;-webkit-text-stroke:0.5px;">18</div>
<div class="t" style="left:1103.76px;top:251.8px;font-size:21px;line-height:21px;color:#ffffff;white-space:nowrap;-webkit-text-stroke:0.5px;">24</div>
<div class="t" style="left:1269.3px;top:251.8px;font-size:21px;line-height:21px;color:#ffffff;white-space:nowrap;-webkit-text-stroke:0.5px;">30</div>
<div class="t" style="left:1434.84px;top:251.8px;font-size:21px;line-height:21px;color:#ffffff;white-space:nowrap;-webkit-text-stroke:0.5px;">36</div>
<div class="t" style="left:1600.3799999999999px;top:251.8px;font-size:21px;line-height:21px;color:#ffffff;white-space:nowrap;-webkit-text-stroke:0.5px;">42</div>
<div class="t" style="left:1765.9199999999998px;top:251.8px;font-size:21px;line-height:21px;color:#ffffff;white-space:nowrap;-webkit-text-stroke:0.5px;">48</div>
<div class="t" style="left:1931.4599999999998px;top:251.8px;font-size:21px;line-height:21px;color:#ffffff;white-space:nowrap;-webkit-text-stroke:0.5px;">54</div>
<div class="t" style="left:90.16015625px;top:404.6px;font-size:21px;line-height:21px;color:#ffffff;white-space:nowrap;-webkit-text-stroke:0.5px;">0</div>
<div class="t" style="left:90.16015625px;top:570.14px;font-size:21px;line-height:21px;color:#ffffff;white-space:nowrap;-webkit-text-stroke:0.5px;">6</div>
<div class="t" style="left:90.16015625px;top:735.68px;font-size:21px;line-height:21px;color:#ffffff;white-space:nowrap;-webkit-text-stroke:0.5px;">1</div>
<div class="t" style="left:90.16015625px;top:753.68px;font-size:21px;line-height:21px;color:#ffffff;white-space:nowrap;-webkit-text-stroke:0.5px;">2</div>
<div class="t" style="left:90.16015625px;top:901.22px;font-size:21px;line-height:21px;color:#ffffff;white-space:nowrap;-webkit-text-stroke:0.5px;">1</div>
<div class="t" style="left:90.16015625px;top:919.22px;font-size:21px;line-height:21px;color:#ffffff;white-space:nowrap;-webkit-text-stroke:0.5px;">8</div>
<div class="t" style="left:90.16015625px;top:1066.76px;font-size:21px;line-height:21px;color:#ffffff;white-space:nowrap;-webkit-text-stroke:0.5px;">2</div>
<div class="t" style="left:90.16015625px;top:1084.76px;font-size:21px;line-height:21px;color:#ffffff;white-space:nowrap;-webkit-text-stroke:0.5px;">4</div>
<div class="t" style="left:90.16015625px;top:1232.3px;font-size:21px;line-height:21px;color:#ffffff;white-space:nowrap;-webkit-text-stroke:0.5px;">3</div>
<div class="t" style="left:90.16015625px;top:1250.3px;font-size:21px;line-height:21px;color:#ffffff;white-space:nowrap;-webkit-text-stroke:0.5px;">0</div>
<div class="t" style="left:90.16015625px;top:1397.84px;font-size:21px;line-height:21px;color:#ffffff;white-space:nowrap;-webkit-text-stroke:0.5px;">3</div>
<div class="t" style="left:90.16015625px;top:1415.84px;font-size:21px;line-height:21px;color:#ffffff;white-space:nowrap;-webkit-text-stroke:0.5px;">6</div>
<svg style="left:338px;top:250px;" width="3" height="31" viewBox="0 0 3 31"><path d="M1.2 0 L1.2 30" stroke="#ffffff" stroke-width="2" stroke-dasharray="2 2"/></svg>
<svg style="left:87px;top:573px;" width="29" height="3" viewBox="0 0 29 3"><path d="M0 1.2 L28 1.2" stroke="#ffffff" stroke-width="2" stroke-dasharray="2 2"/></svg>
<div style="left:2094.2px;top:250px;width:29.8px;height:1312px;background:#4a4a4a;"></div>
<div style="left:2096px;top:324px;width:27.8px;height:686.2px;background:#6a6a6a;border-radius:14px;"></div>
<div style="left:86px;top:1562.4px;width:2038px;height:32.6px;background:#4a4a4a;"></div>
<div style="left:86px;top:1562.4px;width:1028.3px;height:32.6px;background:#535353;"></div>
<div style="left:86px;top:1561.6px;width:2038px;height:1.2px;background:#414141;"></div>
<div style="left:2050.3px;top:1562.8px;width:73.7px;height:32px;background:#4e4e4e;"></div>
<div class="t" style="left:114px;top:1569.0px;font-size:21px;line-height:21px;color:#ececec;white-space:nowrap;letter-spacing:-0.145px;">64.94%</div>
<svg style="left:196px;top:1568px;" width="24" height="20" viewBox="0 0 24 20"><path d="M3.6000000000000005 6.500000000000001 L11.4 14.100000000000001 L19.2 6.500000000000001" fill="none" stroke="#dcdcdc" stroke-width="2"/></svg>
<svg style="left:236px;top:1566px;" width="360" height="26" viewBox="0 0 360 26"><rect x="4" y="4.6" width="3.6" height="16.4" fill="#8a8a8a"/><path d="M20 4.6 L20 21 L9.6 12.8 Z" fill="#8a8a8a"/><path d="M59 4.6 L59 21 L49 12.8 Z" fill="#8a8a8a"/><path d="M289.6 4.6 L289.6 21 L299.8 12.8 Z" fill="#8a8a8a"/><path d="M328 4.6 L328 21 L338.4 12.8 Z" fill="#8a8a8a"/><rect x="340.4" y="4.6" width="3.6" height="16.4" fill="#8a8a8a"/></svg>
<div style="left:321.2px;top:1563.4px;width:177.6px;height:29.6px;background:#454545;border:2px solid #717171;border-radius:6px;border-radius:5px;"></div>
<div style="left:461.6px;top:1565px;width:2px;height:26.4px;background:#717171;"></div>
<div class="t" style="left:330.6px;top:1569.0px;font-size:21px;line-height:21px;color:#f2f2f2;white-space:nowrap;">1</div>
<svg style="left:462px;top:1563.4px;" width="37" height="30" viewBox="0 0 37 30"><path d="M11.3 10.899999999999999 L19 18.3 L26.7 10.899999999999999" fill="none" stroke="#e4e4e4" stroke-width="2"/></svg>
<svg style="left:612px;top:1563px;" width="40" height="30" viewBox="0 0 40 30"><circle cx="14.6" cy="13.8" r="12" fill="#b4b4b4"/><path d="M15.6 3.6 L15.6 15.4 L27.2 15.4" fill="none" stroke="#535353" stroke-width="2.2"/><path d="M29.4 23.3 L36.4 23.3 L32.9 26.6 Z" fill="#b4b4b4"/></svg>
<div class="t" style="left:678.6px;top:1569.0px;font-size:21px;line-height:21px;color:#ececec;white-space:nowrap;letter-spacing:0.175px;">[Basic] (working)</div>
<svg style="left:880px;top:1568px;" width="24" height="20" viewBox="0 0 24 20"><path d="M3.7 5.8999999999999995 L11 13.3 L18.3 5.8999999999999995" fill="none" stroke="#dcdcdc" stroke-width="2"/></svg>
<div style="left:930px;top:1567.2px;width:21.2px;height:21.2px;background:#1a9f1a;border-radius:50%;"></div>
<div class="t" style="left:962.4px;top:1569.0px;font-size:21px;line-height:21px;color:#ececec;white-space:nowrap;letter-spacing:0.248px;">No errors</div>
<svg style="left:1084px;top:1568px;" width="24" height="20" viewBox="0 0 24 20"><path d="M4.8999999999999995 6.1000000000000005 L12.2 13.5 L19.5 6.1000000000000005" fill="none" stroke="#a6a6a6" stroke-width="2"/></svg>
<div style="left:1355.6px;top:1563.6px;width:444.6px;height:29.4px;background:#656565;border-radius:14.7px;"></div>
<svg style="left:2058px;top:1567px;" width="32" height="23" viewBox="0 0 32 23"><rect x="1.2" y="1.2" width="28.6" height="20" fill="none" stroke="#a2a2a2" stroke-width="1.8"/><path d="M15.5 1 L15.5 22" stroke="#a2a2a2" stroke-width="1.8"/></svg>
<svg style="left:2102px;top:1571.4px;" width="20" height="20" viewBox="0 0 20 20"><rect x="16" y="0" width="1.6" height="1.6" fill="#7a7a7a"/><rect x="12" y="4" width="1.6" height="1.6" fill="#7a7a7a"/><rect x="16" y="4" width="1.6" height="1.6" fill="#7a7a7a"/><rect x="8" y="8" width="1.6" height="1.6" fill="#7a7a7a"/><rect x="12" y="8" width="1.6" height="1.6" fill="#7a7a7a"/><rect x="16" y="8" width="1.6" height="1.6" fill="#7a7a7a"/><rect x="4" y="12" width="1.6" height="1.6" fill="#7a7a7a"/><rect x="8" y="12" width="1.6" height="1.6" fill="#7a7a7a"/><rect x="12" y="12" width="1.6" height="1.6" fill="#7a7a7a"/><rect x="16" y="12" width="1.6" height="1.6" fill="#7a7a7a"/><rect x="0" y="16" width="1.6" height="1.6" fill="#7a7a7a"/><rect x="4" y="16" width="1.6" height="1.6" fill="#7a7a7a"/><rect x="8" y="16" width="1.6" height="1.6" fill="#7a7a7a"/><rect x="12" y="16" width="1.6" height="1.6" fill="#7a7a7a"/><rect x="16" y="16" width="1.6" height="1.6" fill="#7a7a7a"/></svg>
<div style="left:2124px;top:190px;width:6px;height:1405px;background:#393939;"></div>
<div style="left:2126px;top:192px;width:2px;height:1403px;background:#474747;"></div>
<!-- right dock -->
<div style="left:2130px;top:192px;width:750px;height:22px;background:#424242;"></div>
<div style="left:2130px;top:214px;width:750px;height:2.2px;background:#3a3a3a;"></div>
<div style="left:2204.4px;top:214px;width:5.6px;height:1381px;background:#3a3a3a;"></div>
<div style="left:2206.0px;top:216px;width:2.2px;height:1379px;background:#484848;"></div>
<div style="left:2544.4px;top:214px;width:5.6px;height:1381px;background:#3a3a3a;"></div>
<div style="left:2546.0px;top:216px;width:2.2px;height:1379px;background:#484848;"></div>
<svg style="left:2175.6px;top:196px;" width="20" height="14" viewBox="0 0 20 14"><path d="M8.8 2.2 L3.5999999999999996 7.2 L8.8 12.2 M16.2 2.2 L11 7.2 L16.2 12.2" fill="none" stroke="#d8d8d8" stroke-width="1.5"/></svg>
<svg style="left:2515.6px;top:196px;" width="20" height="14" viewBox="0 0 20 14"><path d="M8.8 2.2 L3.5999999999999996 7.2 L8.8 12.2 M16.2 2.2 L11 7.2 L16.2 12.2" fill="none" stroke="#d8d8d8" stroke-width="1.5"/></svg>
<svg style="left:2849.6px;top:196px;" width="20" height="14" viewBox="0 0 20 14"><path d="M8.8 2.2 L3.5999999999999996 7.2 L8.8 12.2 M16.2 2.2 L11 7.2 L16.2 12.2" fill="none" stroke="#d8d8d8" stroke-width="1.5"/></svg>
<svg style="left:2148px;top:222.2px;" width="40" height="8" viewBox="0 0 40 8"><rect x="0" y="0" width="2.1" height="7.6" fill="#393939"/><rect x="4" y="0" width="2.1" height="7.6" fill="#393939"/><rect x="8" y="0" width="2.1" height="7.6" fill="#393939"/><rect x="12" y="0" width="2.1" height="7.6" fill="#393939"/><rect x="16" y="0" width="2.1" height="7.6" fill="#393939"/><rect x="20" y="0" width="2.1" height="7.6" fill="#393939"/><rect x="24" y="0" width="2.1" height="7.6" fill="#393939"/><rect x="28" y="0" width="2.1" height="7.6" fill="#393939"/><rect x="32" y="0" width="2.1" height="7.6" fill="#393939"/><rect x="36" y="0" width="2.1" height="7.6" fill="#393939"/></svg>
<div style="left:2130px;top:295.5px;width:74.4px;height:2.4px;background:#3a3a3a;"></div>
<svg style="left:2150px;top:242px;" width="36" height="40" viewBox="0 0 36 40"><rect x="4.9" y="2.9" width="8.2" height="8.2" fill="none" stroke="#c6c6c6" stroke-width="1.8"/><rect x="4.9" y="14.9" width="8.2" height="8.2" fill="none" stroke="#c6c6c6" stroke-width="1.8"/><rect x="4" y="26" width="10" height="10" fill="#c6c6c6"/><path d="M19.6 14 L20 4.6 L32 4 L27.8 8.6 C32.6 14.4 33 25 22.2 31.4 C28.4 24.4 28 17 24.4 11.6 Z" fill="#c6c6c6"/></svg>
<svg style="left:2357.8px;top:222.2px;" width="40" height="8" viewBox="0 0 40 8"><rect x="0" y="0" width="2.1" height="7.6" fill="#393939"/><rect x="4" y="0" width="2.1" height="7.6" fill="#393939"/><rect x="8" y="0" width="2.1" height="7.6" fill="#393939"/><rect x="12" y="0" width="2.1" height="7.6" fill="#393939"/><rect x="16" y="0" width="2.1" height="7.6" fill="#393939"/><rect x="20" y="0" width="2.1" height="7.6" fill="#393939"/><rect x="24" y="0" width="2.1" height="7.6" fill="#393939"/><rect x="28" y="0" width="2.1" height="7.6" fill="#393939"/><rect x="32" y="0" width="2.1" height="7.6" fill="#393939"/><rect x="36" y="0" width="2.1" height="7.6" fill="#393939"/></svg>
<div style="left:2210px;top:295.5px;width:334.4px;height:2.4px;background:#3a3a3a;"></div>
<div class="t" style="left:2285.2px;top:253.0px;font-size:23px;line-height:23px;color:#f2f2f2;white-space:nowrap;font-weight:bold;letter-spacing:0.055px;-webkit-text-stroke:0;">Index</div>
<svg style="left:2357.8px;top:304.2px;" width="40" height="8" viewBox="0 0 40 8"><rect x="0" y="0" width="2.1" height="7.6" fill="#393939"/><rect x="4" y="0" width="2.1" height="7.6" fill="#393939"/><rect x="8" y="0" width="2.1" height="7.6" fill="#393939"/><rect x="12" y="0" width="2.1" height="7.6" fill="#393939"/><rect x="16" y="0" width="2.1" height="7.6" fill="#393939"/><rect x="20" y="0" width="2.1" height="7.6" fill="#393939"/><rect x="24" y="0" width="2.1" height="7.6" fill="#393939"/><rect x="28" y="0" width="2.1" height="7.6" fill="#393939"/><rect x="32" y="0" width="2.1" height="7.6" fill="#393939"/><rect x="36" y="0" width="2.1" height="7.6" fill="#393939"/></svg>
<div style="left:2210px;top:377.5px;width:334.4px;height:2.4px;background:#3a3a3a;"></div>
<div class="t" style="left:2285.2px;top:335.0px;font-size:23px;line-height:23px;color:#f2f2f2;white-space:nowrap;font-weight:bold;letter-spacing:0.515px;-webkit-text-stroke:0;">Conditional Text</div>
<svg style="left:2357.8px;top:386.2px;" width="40" height="8" viewBox="0 0 40 8"><rect x="0" y="0" width="2.1" height="7.6" fill="#393939"/><rect x="4" y="0" width="2.1" height="7.6" fill="#393939"/><rect x="8" y="0" width="2.1" height="7.6" fill="#393939"/><rect x="12" y="0" width="2.1" height="7.6" fill="#393939"/><rect x="16" y="0" width="2.1" height="7.6" fill="#393939"/><rect x="20" y="0" width="2.1" height="7.6" fill="#393939"/><rect x="24" y="0" width="2.1" height="7.6" fill="#393939"/><rect x="28" y="0" width="2.1" height="7.6" fill="#393939"/><rect x="32" y="0" width="2.1" height="7.6" fill="#393939"/><rect x="36" y="0" width="2.1" height="7.6" fill="#393939"/></svg>
<div style="left:2210px;top:459.5px;width:334.4px;height:2.4px;background:#3a3a3a;"></div>
<div class="t" style="left:2285.2px;top:417.0px;font-size:23px;line-height:23px;color:#f2f2f2;white-space:nowrap;font-weight:bold;letter-spacing:0.308px;-webkit-text-stroke:0;">Cross-References</div>
<svg style="left:2357.8px;top:468.2px;" width="40" height="8" viewBox="0 0 40 8"><rect x="0" y="0" width="2.1" height="7.6" fill="#393939"/><rect x="4" y="0" width="2.1" height="7.6" fill="#393939"/><rect x="8" y="0" width="2.1" height="7.6" fill="#393939"/><rect x="12" y="0" width="2.1" height="7.6" fill="#393939"/><rect x="16" y="0" width="2.1" height="7.6" fill="#393939"/><rect x="20" y="0" width="2.1" height="7.6" fill="#393939"/><rect x="24" y="0" width="2.1" height="7.6" fill="#393939"/><rect x="28" y="0" width="2.1" height="7.6" fill="#393939"/><rect x="32" y="0" width="2.1" height="7.6" fill="#393939"/><rect x="36" y="0" width="2.1" height="7.6" fill="#393939"/></svg>
<div style="left:2210px;top:541.5px;width:334.4px;height:2.4px;background:#3a3a3a;"></div>
<div class="t" style="left:2285.2px;top:499.0px;font-size:23px;line-height:23px;color:#f2f2f2;white-space:nowrap;font-weight:bold;letter-spacing:0.265px;-webkit-text-stroke:0;">Hyperlinks</div>
<svg style="left:2357.8px;top:550.2px;" width="40" height="8" viewBox="0 0 40 8"><rect x="0" y="0" width="2.1" height="7.6" fill="#393939"/><rect x="4" y="0" width="2.1" height="7.6" fill="#393939"/><rect x="8" y="0" width="2.1" height="7.6" fill="#393939"/><rect x="12" y="0" width="2.1" height="7.6" fill="#393939"/><rect x="16" y="0" width="2.1" height="7.6" fill="#393939"/><rect x="20" y="0" width="2.1" height="7.6" fill="#393939"/><rect x="24" y="0" width="2.1" height="7.6" fill="#393939"/><rect x="28" y="0" width="2.1" height="7.6" fill="#393939"/><rect x="32" y="0" width="2.1" height="7.6" fill="#393939"/><rect x="36" y="0" width="2.1" height="7.6" fill="#393939"/></svg>
<div style="left:2210px;top:623.5px;width:334.4px;height:2.4px;background:#3a3a3a;"></div>
<div class="t" style="left:2285.2px;top:581.0px;font-size:23px;line-height:23px;color:#f2f2f2;white-space:nowrap;font-weight:bold;letter-spacing:-0.16px;-webkit-text-stroke:0;">Bookmarks</div>
<svg style="left:2357.8px;top:632.2px;" width="40" height="8" viewBox="0 0 40 8"><rect x="0" y="0" width="2.1" height="7.6" fill="#393939"/><rect x="4" y="0" width="2.1" height="7.6" fill="#393939"/><rect x="8" y="0" width="2.1" height="7.6" fill="#393939"/><rect x="12" y="0" width="2.1" height="7.6" fill="#393939"/><rect x="16" y="0" width="2.1" height="7.6" fill="#393939"/><rect x="20" y="0" width="2.1" height="7.6" fill="#393939"/><rect x="24" y="0" width="2.1" height="7.6" fill="#393939"/><rect x="28" y="0" width="2.1" height="7.6" fill="#393939"/><rect x="32" y="0" width="2.1" height="7.6" fill="#393939"/><rect x="36" y="0" width="2.1" height="7.6" fill="#393939"/></svg>
<div style="left:2210px;top:705.5px;width:334.4px;height:2.4px;background:#3a3a3a;"></div>
<div class="t" style="left:2285.2px;top:663.0px;font-size:23px;line-height:23px;color:#f2f2f2;white-space:nowrap;font-weight:bold;letter-spacing:-0.338px;-webkit-text-stroke:0;">Style Packs</div>
<svg style="left:2232px;top:246.1px;" width="30" height="31" viewBox="0 0 30 31"><rect x="0" y="0" width="16" height="3.8" fill="#c6c6c6"/><rect x="6.3" y="6.2" width="23.7" height="2.2" fill="#c6c6c6"/><rect x="6.3" y="10.3" width="23.7" height="2.2" fill="#c6c6c6"/><rect x="6.3" y="14.2" width="23.7" height="2.2" fill="#c6c6c6"/><rect x="0" y="18.1" width="16" height="3.8" fill="#c6c6c6"/><rect x="6.3" y="24.1" width="23.7" height="2.2" fill="#c6c6c6"/><rect x="6.3" y="27.9" width="23.7" height="2.2" fill="#c6c6c6"/></svg>
<svg style="left:2232px;top:324px;" width="30" height="40" viewBox="0 0 30 40"><path d="M2 2 L28.2 2 L28.2 10 L24.6 10 L24.6 6 L17.8 6 L17.8 21.8 L22 21.8 L22 25.8 L8.2 25.8 L8.2 21.8 L12.4 21.8 L12.4 6 L5.6 6 L5.6 10 L2 10 Z" fill="#c6c6c6"/><path d="M2.4 31.6 L6.6 35.8 L10.9 31.6 L15.1 35.8 L19.4 31.6 L23.6 35.8 L27.8 31.6" fill="none" stroke="#c6c6c6" stroke-width="2.6"/></svg>
<div class="t" style="left:2228.4px;top:407.2px;font-size:21px;line-height:21px;color:#bdbdbd;white-space:nowrap;letter-spacing:-0.23px;-webkit-text-stroke:0.2px;">abc</div>
<svg style="left:2226px;top:404px;" width="42" height="44" viewBox="0 0 42 44"><rect x="1" y="25.8" width="38.8" height="2" fill="#c6c6c6"/><path d="M20.7 22.7 L20.7 41.8 L26 36.6 L36.7 33.7 Z" fill="#c6c6c6" stroke="#535353" stroke-width="2.2" paint-order="stroke"/></svg>
<svg style="left:2220px;top:480px;" width="60" height="50" viewBox="0 0 60 50"><clipPath id="glb"><circle cx="22.3" cy="23.7" r="13.6"/></clipPath><g clip-path="url(#glb)"><path d="M14.8 12.6 C12.6 15.6 13.2 19 16.4 23.7 C18.6 26.4 20.6 28.4 21.6 31 C22.2 33 22 35 22 38 L6 38 L6 8 L14.8 8 Z" fill="#c6c6c6"/><path d="M17.4 11.1 L19.6 12.2 L20.6 15 L22.3 14.3 L23.7 15 L22.6 19 L21.6 20.6 L18.8 20.6 L17.4 21.6 L20.9 24.7 L29.3 26.8 L30.3 20.2 L32.2 17.6 L33.4 19.8 L36.6 20.4 L37 8 L25.2 8 L25.4 10.4 L24.4 12 L22.6 11.2 L22.4 9.6 L19 9.6 Z" fill="#c6c6c6"/></g><path d="M33.4 22.3 C34.3 22.3 34.9 22.9 34.9 23.8 L34.9 30.2 C35.3 28.6 36.4 28 37.6 28.2 C38.7 28.4 39.3 29.2 39.3 30.4 L39.5 31.6 C40 30.8 40.9 30.6 41.7 31 C42.5 31.4 42.8 32.1 42.7 33 L42.6 34.2 C43.2 33.5 44 33.4 44.6 33.8 C45.1 34.2 45.3 34.9 45.1 35.8 L43.6 40.6 C42.8 43.4 40 44.9 37 44.9 C35.4 44.9 33.9 44.2 32.9 42.9 L26.6 35.6 C25.9 34.8 25.9 33.9 26.5 33.4 C27.2 32.8 28.1 32.9 28.8 33.5 L31.9 36 L31.9 23.8 C31.9 22.9 32.5 22.3 33.4 22.3 Z" fill="#c6c6c6" stroke="#535353" stroke-width="1.8" paint-order="stroke"/></svg>
<svg style="left:2238px;top:572px;" width="19" height="35" viewBox="0 0 19 35"><path d="M0 0 L18.2 0 L18.2 34.2 L9.1 26.3 L0 34.2 Z" fill="#c6c6c6"/></svg>
<svg style="left:2230px;top:656px;" width="35" height="28" viewBox="0 0 35 28"><path d="M0 1 Q0 0.2 0.8 0.2 L12 0.2 L15.4 4 L33.4 4 Q34.2 4 34.2 4.8 L34.2 27 Q34.2 27.6 33.4 27.6 L0.8 27.6 Q0 27.6 0 27 Z" fill="#c6c6c6"/><path d="M2.2 4.2 L2.2 2.4 L11 2.4 L14 5.8 L2.2 5.8 Z" fill="#535353"/><path d="M25 6.6 L17.8 16.6 L22.4 17 L19.6 24.8 L28.2 13.8 L23.4 13.4 Z" fill="#262626"/></svg>
<svg style="left:2694px;top:222.2px;" width="40" height="8" viewBox="0 0 40 8"><rect x="0" y="0" width="2.1" height="7.6" fill="#393939"/><rect x="4" y="0" width="2.1" height="7.6" fill="#393939"/><rect x="8" y="0" width="2.1" height="7.6" fill="#393939"/><rect x="12" y="0" width="2.1" height="7.6" fill="#393939"/><rect x="16" y="0" width="2.1" height="7.6" fill="#393939"/><rect x="20" y="0" width="2.1" height="7.6" fill="#393939"/><rect x="24" y="0" width="2.1" height="7.6" fill="#393939"/><rect x="28" y="0" width="2.1" height="7.6" fill="#393939"/><rect x="32" y="0" width="2.1" height="7.6" fill="#393939"/><rect x="36" y="0" width="2.1" height="7.6" fill="#393939"/></svg>
<div style="left:2550px;top:407.8px;width:330px;height:2.4px;background:#3a3a3a;"></div>
<svg style="left:2694px;top:416.2px;" width="40" height="8" viewBox="0 0 40 8"><rect x="0" y="0" width="2.1" height="7.6" fill="#393939"/><rect x="4" y="0" width="2.1" height="7.6" fill="#393939"/><rect x="8" y="0" width="2.1" height="7.6" fill="#393939"/><rect x="12" y="0" width="2.1" height="7.6" fill="#393939"/><rect x="16" y="0" width="2.1" height="7.6" fill="#393939"/><rect x="20" y="0" width="2.1" height="7.6" fill="#393939"/><rect x="24" y="0" width="2.1" height="7.6" fill="#393939"/><rect x="28" y="0" width="2.1" height="7.6" fill="#393939"/><rect x="32" y="0" width="2.1" height="7.6" fill="#393939"/><rect x="36" y="0" width="2.1" height="7.6" fill="#393939"/></svg>
<div style="left:2550px;top:489.7px;width:330px;height:2.4px;background:#3a3a3a;"></div>
<div class="t" style="left:2625.2px;top:253.0px;font-size:23px;line-height:23px;color:#f2f2f2;white-space:nowrap;font-weight:bold;transform:scaleX(0.9444);transform-origin:0 0;-webkit-text-stroke:0;">Pages</div>
<div class="t" style="left:2625.2px;top:309.2px;font-size:23px;line-height:23px;color:#f2f2f2;white-space:nowrap;font-weight:bold;letter-spacing:-0.594px;-webkit-text-stroke:0;">Layers</div>
<div class="t" style="left:2625.2px;top:365.4px;font-size:23px;line-height:23px;color:#f2f2f2;white-space:nowrap;font-weight:bold;letter-spacing:-0.47px;-webkit-text-stroke:0;">Links</div>
<div class="t" style="left:2625.2px;top:447.2px;font-size:23px;line-height:23px;color:#f2f2f2;white-space:nowrap;font-weight:bold;letter-spacing:-0.062px;-webkit-text-stroke:0;">Paragraph Styles</div>
<svg style="left:2568px;top:241px;" width="40" height="40" viewBox="0 0 40 40"><rect x="18" y="1" width="2" height="38" fill="#dadada"/><path d="M9.6 7.3 L17 7.3 L17 33 L1.9 33 L1.9 15.4 L9.6 15.4 Z" fill="#c6c6c6"/><path d="M8.2 7.9 L8.2 13.9 L2.4 13.9 Z" fill="#c6c6c6"/><path d="M28.6 7.3 L21 7.3 L21 33 L36.2 33 L36.2 15.4 L28.6 15.4 Z" fill="#c6c6c6"/><path d="M30 7.9 L30 13.9 L35.8 13.9 Z" fill="#c6c6c6"/></svg>
<svg style="left:2570px;top:299px;" width="35" height="37" viewBox="0 0 35 37"><path d="M17 1 L33.3 11.7 L17 23 L0.7 11.7 Z" fill="#c6c6c6"/><path d="M4.8 19.8 L17 27.6 L29.2 19.8 L33.3 23.4 L17 35.2 L0.7 23.4 Z" fill="#c6c6c6"/></svg>
<svg style="left:2566px;top:362px;" width="42" height="22" viewBox="0 0 42 22"><rect x="17.4" y="3.9" width="21" height="13.4" rx="6.7" fill="none" stroke="#c6c6c6" stroke-width="3.8"/><path d="M20 3.9 L17.9 3.9 A6.7 6.7 0 0 1 24.6 10.6" fill="none" stroke="#535353" stroke-width="7"/><rect x="3.7" y="3.9" width="21" height="13.4" rx="6.7" fill="none" stroke="#c6c6c6" stroke-width="3.8"/><path d="M17.4 10.6 A6.7 6.7 0 0 0 24.1 17.3 L26 17.3" fill="none" stroke="#535353" stroke-width="7"/><path d="M17.4 9 L17.4 10.6 A6.7 6.7 0 0 0 24.1 17.3 L28 17.3" fill="none" stroke="#c6c6c6" stroke-width="3.8"/></svg>
<svg style="left:2568px;top:436px;" width="36" height="38" viewBox="0 0 36 38"><path d="M21.2 2.3 L34 2.3 L34 27.8 L31.6 27.8 L31.6 4.5 L28.2 4.5 L28.2 27.8 L25.9 27.8 L25.9 16.1 L21.2 16.1 A6.9 6.9 0 0 1 21.2 2.3 Z" fill="#c6c6c6"/><rect x="3" y="19" width="10.2" height="10.4" fill="none" stroke="#c6c6c6" stroke-width="1.9"/><rect x="5.9" y="22.4" width="14.1" height="13.6" fill="#c6c6c6"/><path d="M8.4 24.4 L13.2 24.4 L13.2 29.4 L8.4 29.4" fill="none" stroke="#535353" stroke-width="1.6"/></svg>
<!-- tools panel -->
<div style="left:2px;top:192px;width:78px;height:22px;background:#424242;"></div>
<div style="left:2px;top:214px;width:78px;height:2.2px;background:#3a3a3a;"></div>
<div style="left:80px;top:190px;width:6px;height:1405px;background:#393939;"></div>
<div style="left:82px;top:192px;width:2px;height:1403px;background:#474747;"></div>
<svg style="left:8px;top:196px;" width="24" height="14" viewBox="0 0 24 14"><path d="M4.2 2 L9.4 7 L4.2 12 M11.6 2 L16.8 7 L11.6 12" fill="none" stroke="#d8d8d8" stroke-width="1.5"/></svg>
<svg style="left:22px;top:222.2px;" width="40" height="8" viewBox="0 0 40 8"><rect x="0" y="0" width="2.1" height="7.6" fill="#393939"/><rect x="4" y="0" width="2.1" height="7.6" fill="#393939"/><rect x="8" y="0" width="2.1" height="7.6" fill="#393939"/><rect x="12" y="0" width="2.1" height="7.6" fill="#393939"/><rect x="16" y="0" width="2.1" height="7.6" fill="#393939"/><rect x="20" y="0" width="2.1" height="7.6" fill="#393939"/><rect x="24" y="0" width="2.1" height="7.6" fill="#393939"/><rect x="28" y="0" width="2.1" height="7.6" fill="#393939"/><rect x="32" y="0" width="2.1" height="7.6" fill="#393939"/><rect x="36" y="0" width="2.1" height="7.6" fill="#393939"/></svg>
<div style="left:12px;top:246px;width:55.8px;height:43.9px;background:#2f2f2f;border-radius:5px;"></div>
<div style="left:4px;top:485.8px;width:72px;height:1.6px;background:#484848;"></div>
<div style="left:4px;top:779.6px;width:72px;height:1.6px;background:#484848;"></div>
<div style="left:4px;top:977.9000000000001px;width:72px;height:1.6px;background:#484848;"></div>
<div style="left:4px;top:1175.8px;width:72px;height:1.6px;background:#484848;"></div>
<div style="left:12.2px;top:1292.1px;width:27.7px;height:23.7px;background:#323232;border-radius:4px;"></div>
<div style="left:12.2px;top:1330.1px;width:55.4px;height:43.8px;background:#323232;border-radius:5px;"></div>
<div style="left:12.2px;top:1446px;width:55.4px;height:43.8px;background:#323232;border-radius:5px;"></div>
<svg style="left:0;top:0" width="86" height="1595" viewBox="0 0 86 1595"><path d="M30.9 253.6 L30.9 283.8 L39.9 274.6 L51.6 274.6 Z" fill="none" stroke="#a2a2a2" stroke-width="1.8" stroke-linejoin="miter"/><path d="M30 299.6 L30 334.4 L40.4 323.8 L54 323.8 Z" fill="#a2a2a2"/><path d="M45 375 L29.2 375 L29.2 349.2 L40.2 349.2 L51.2 359.6 L51.2 364.4" fill="none" stroke="#c6c6c6" stroke-width="2.2"/><path d="M40.6 349.6 L40.6 359 L50.8 359" fill="none" stroke="#c6c6c6" stroke-width="2"/><path d="M46.1 363 L46.1 379.4 L50.6 373.9 L57.6 373.3 Z" fill="#c6c6c6"/><rect x="22" y="398" width="4.1" height="27.9" fill="#c6c6c6"/><rect x="54.2" y="398" width="4" height="27.9" fill="#c6c6c6"/><path d="M27.4 411.4 L34.2 405 L34.2 410.1 L46 410.1 L46 405 L52.8 411.4 L46 417.8 L46 412.7 L34.2 412.7 L34.2 417.8 Z" fill="#c6c6c6"/><path d="M26.1 456.3 L29.9 456.3 L29.9 471.9 L50.2 471.9 L50.2 456.3 L54 456.3 L54 475.9 L26.1 475.9 Z" fill="#c6c6c6"/><rect x="32.2" y="460.2" width="3.8" height="3.8" fill="#c6c6c6"/><rect x="44.2" y="460.2" width="3.8" height="3.8" fill="#c6c6c6"/><rect x="32.2" y="466.3" width="3.8" height="3.8" fill="#c6c6c6"/><rect x="38.1" y="466.3" width="3.8" height="3.8" fill="#c6c6c6"/><rect x="44.2" y="466.3" width="3.8" height="3.8" fill="#c6c6c6"/><path d="M30 445.6 L32.2 443.4 L39.4 450.4 L42.1 447.2 L42.1 456 L32.7 456 L36.6 452.6 Z" fill="#c6c6c6"/><path d="M64.9 472.9 L64.9 479.9 L57.9 479.9 Z" fill="#c6c6c6"/><path d="M26.1 501.2 Q26.1 500.3 27 500.3 L53.1 500.3 Q54 500.3 54 501.2 L54 506.9 Q54 507.8 53.1 507.8 L51.1 507.8 Q50.2 507.8 50.2 506.9 L50.2 504.1 L42.1 504.1 L42.1 524.4 L45.2 524.4 Q46.1 524.4 46.1 525.3 L46.1 527.3 Q46.1 528.2 45.2 528.2 L35 528.2 Q34.1 528.2 34.1 527.3 L34.1 525.3 Q34.1 524.4 35 524.4 L38.1 524.4 L38.1 504.1 L29.9 504.1 L29.9 506.9 Q29.9 507.8 29 507.8 L27 507.8 Q26.1 507.8 26.1 506.9 Z" fill="#c6c6c6"/><path d="M64.9 527 L64.9 534 L57.9 534 Z" fill="#c6c6c6"/><path d="M26.9 576.4 L54 548.9" stroke="#c6c6c6" stroke-width="2.7"/><path d="M46.1 594.5 L55.6 603.6 L50.4 609 L40.8 600.2 Z" fill="#c6c6c6"/><path d="M39.7 601.6 L48.4 610 L44.5 619.2 L26.8 626.1 L23.8 622.6 L31.1 605.7 Z" fill="#c6c6c6"/><path d="M25.4 624 L34.6 615.6" stroke="#535353" stroke-width="1.6"/><circle cx="34.9" cy="615.3" r="2" fill="#535353"/><path d="M64.9 622.9 L64.9 629.9 L57.9 629.9 Z" fill="#c6c6c6"/><path d="M48.8 642 L56 648.7 L51.3 654 L44 647.1 Z" fill="#c6c6c6"/><path d="M42.9 648.3 L49.9 655.1 L34.3 670.7 L23.8 673.9 L26.8 663.9 Z" fill="#c6c6c6"/><path d="M28.2 666.2 L32.4 669.8 L26.2 671.6 Z" fill="#535353"/><path d="M64.9 671 L64.9 678 L57.9 678 Z" fill="#c6c6c6"/><rect x="24.9" y="692.8" width="30.2" height="26" fill="none" stroke="#c6c6c6" stroke-width="2"/><path d="M25 693 L55 718.6 M55 693 L25 718.6" stroke="#c6c6c6" stroke-width="1.8"/><path d="M64.9 718.9 L64.9 725.9 L57.9 725.9 Z" fill="#c6c6c6"/><rect x="24.9" y="740.8" width="30.2" height="26.3" fill="#6e6e6e" stroke="#c6c6c6" stroke-width="2"/><path d="M64.9 767 L64.9 774 L57.9 774 Z" fill="#c6c6c6"/><circle cx="52.1" cy="798.3" r="5.1" fill="none" stroke="#c6c6c6" stroke-width="2"/><circle cx="52.1" cy="817.9" r="5.1" fill="none" stroke="#c6c6c6" stroke-width="2"/><path d="M23 800.7 L28.2 798.4 L43.4 805.4 L41.2 809.8 Z" fill="#c6c6c6"/><path d="M41.6 807.2 L48 814.4" stroke="#c6c6c6" stroke-width="2.8"/><path d="M23 815.5 L28.2 817.8 L43.4 810.8 L41.2 806.4 Z" fill="#c6c6c6"/><path d="M41.6 809 L48 801.8" stroke="#c6c6c6" stroke-width="2.8"/><rect x="34.2" y="844.3" width="23.8" height="23.6" fill="none" stroke="#c6c6c6" stroke-width="1.6"/><rect x="32.4" y="842.6" width="3.7" height="3.7" fill="#c6c6c6"/><rect x="44.2" y="842.6" width="3.7" height="3.7" fill="#c6c6c6"/><rect x="56.2" y="842.6" width="3.7" height="3.7" fill="#c6c6c6"/><rect x="56.2" y="854.2" width="3.7" height="3.7" fill="#c6c6c6"/><rect x="32.4" y="866" width="3.7" height="3.7" fill="#c6c6c6"/><rect x="44.2" y="866" width="3.7" height="3.7" fill="#c6c6c6"/><rect x="56.2" y="866" width="3.7" height="3.7" fill="#c6c6c6"/><path d="M22 838.6 L22 866.8 L41.4 857.2 Z" fill="#c6c6c6" stroke="#535353" stroke-width="1.6" paint-order="stroke"/><path d="M64.9 868.9 L64.9 875.9 L57.9 875.9 Z" fill="#c6c6c6"/><defs><linearGradient id="gsw" x1="0" y1="0" x2="1" y2="0"><stop offset="0" stop-color="#202020"/><stop offset="1" stop-color="#e6e6e6"/></linearGradient></defs><rect x="24.9" y="890.9" width="30.2" height="26.2" fill="url(#gsw)" stroke="#8c8c8c" stroke-width="2"/><rect x="25.90" y="939.90" width="5.7" height="6.1" fill="#7a7a7a"/><rect x="31.54" y="939.90" width="5.7" height="6.1" fill="#b2b2b2"/><rect x="37.18" y="939.90" width="5.7" height="6.1" fill="#7a7a7a"/><rect x="42.82" y="939.90" width="5.7" height="6.1" fill="#b2b2b2"/><rect x="48.46" y="939.90" width="5.7" height="6.1" fill="#7a7a7a"/><rect x="25.90" y="945.98" width="5.7" height="6.1" fill="#a0a0a0"/><rect x="31.54" y="945.98" width="5.7" height="6.1" fill="#646464"/><rect x="37.18" y="945.98" width="5.7" height="6.1" fill="#a0a0a0"/><rect x="42.82" y="945.98" width="5.7" height="6.1" fill="#646464"/><rect x="48.46" y="945.98" width="5.7" height="6.1" fill="#a0a0a0"/><rect x="25.90" y="952.06" width="5.7" height="6.1" fill="#3e3e3e"/><rect x="31.54" y="952.06" width="5.7" height="6.1" fill="#6e6e6e"/><rect x="37.18" y="952.06" width="5.7" height="6.1" fill="#3e3e3e"/><rect x="42.82" y="952.06" width="5.7" height="6.1" fill="#6e6e6e"/><rect x="48.46" y="952.06" width="5.7" height="6.1" fill="#3e3e3e"/><rect x="25.90" y="958.14" width="5.7" height="6.1" fill="#4e4e4e"/><rect x="31.54" y="958.14" width="5.7" height="6.1" fill="#2c2c2c"/><rect x="37.18" y="958.14" width="5.7" height="6.1" fill="#4e4e4e"/><rect x="42.82" y="958.14" width="5.7" height="6.1" fill="#2c2c2c"/><rect x="48.46" y="958.14" width="5.7" height="6.1" fill="#4e4e4e"/><rect x="24.9" y="938.9" width="30.2" height="26.3" fill="none" stroke="#c6c6c6" stroke-width="2"/><path d="M26 992 L54.1 992 L54.1 1011.4 L44.6 1011.4 L44.6 1020.3 L26 1020.3 Z" fill="#c6c6c6"/><path d="M46.2 1013 L54.1 1013 L46.2 1020.3 Z" fill="#c6c6c6"/><rect x="32" y="998" width="16" height="2" fill="#535353"/><rect x="32" y="1003.8" width="16" height="2" fill="#535353"/><rect x="32" y="1009.9" width="7.9" height="2" fill="#535353"/><g transform="translate(52.4 1041.8) rotate(45)"><rect x="-4.1" y="-5.6" width="8.2" height="13" rx="4.1" fill="#c6c6c6"/><rect x="-8.4" y="5.6" width="16.8" height="4.2" rx="0.8" fill="#c6c6c6"/><rect x="-5" y="9" width="10" height="4.4" fill="#c6c6c6"/><path d="M-3.6 13 L-3.6 24 L-2.4 33.4 Q-2.2 36.4 0 36.4 Q2.2 36.4 2.4 33.4 L3.6 24 L3.6 13" fill="none" stroke="#c6c6c6" stroke-width="2"/></g><path d="M64.9 1067 L64.9 1074 L57.9 1074 Z" fill="#c6c6c6"/><g stroke="#c6c6c6" stroke-width="4" stroke-linecap="round" fill="none"><path d="M33.4 1090.4 L37.2 1106"/><path d="M40.3 1088 L40.8 1106"/><path d="M47 1090.2 L45 1106"/><path d="M53.2 1095.8 L48.6 1108.6"/></g><path d="M24 1100.6 C25.4 1099 27.6 1099.4 29.6 1101 L35.6 1106 L35.6 1102 L50.6 1102 C51 1108 49.6 1112.6 47 1115.8 C43.6 1119 38.4 1118.8 35.4 1116 C31.4 1112 27.6 1106.6 24 1100.6 Z" fill="#c6c6c6"/><circle cx="36.3" cy="1146.4" r="10.8" fill="none" stroke="#c6c6c6" stroke-width="2.4"/><path d="M44.4 1154.6 L54 1164.4" stroke="#c6c6c6" stroke-width="4.2" stroke-linecap="round"/><rect x="16.9" y="1190" width="16.2" height="16.2" fill="#000" stroke="#c6c6c6" stroke-width="1.5"/><rect x="21" y="1194" width="8" height="8" fill="#535353"/><rect x="10.8" y="1184.3" width="16.2" height="16.2" fill="#fff" stroke="#c6c6c6" stroke-width="1.5"/><rect x="12.6" y="1186.1" width="12.6" height="12.6" fill="#fff" stroke="#000" stroke-width="1.8"/><path d="M13.6 1197.8 L24.2 1187.2" stroke="#ff2020" stroke-width="1.3"/><path d="M54 1195 C60 1195 63.2 1198 63.2 1203.6" fill="none" stroke="#c6c6c6" stroke-width="4.2"/><path d="M48 1194.6 L55 1188 L55 1201.4 Z" fill="#c6c6c6"/><path d="M63.3 1210.6 L56.6 1203 L70 1203 Z" fill="#c6c6c6"/><path d="M29.8 1237.7 L69.3 1237.7 L69.3 1277 L29.8 1277 Z M40.8 1249.2 L40.8 1265.7 L58.2 1265.7 L58.2 1249.2 Z" fill="#000" fill-rule="evenodd"/><rect x="10.8" y="1218.8" width="39.2" height="39.2" fill="#000" stroke="#535353" stroke-width="1.6" paint-order="stroke"/><rect x="19" y="1296.9" width="14.1" height="14.2" fill="#6e6e6e" stroke="#c6c6c6" stroke-width="2"/><rect x="24" y="1337.9" width="30.2" height="26.2" fill="#000" stroke="#a2a2a2" stroke-width="2"/><path d="M65.2 1364.9 L65.2 1372 L58.2 1372 Z" fill="#c6c6c6"/><rect x="35.8" y="1407" width="18.6" height="12.2" fill="#c6c6c6"/><rect x="33.8" y="1398.9" width="2" height="7.5" fill="#c6c6c6"/><rect x="27.7" y="1404.3" width="8.1" height="2.1" fill="#c6c6c6"/><rect x="39.9" y="1398.9" width="2" height="3.1" fill="#c6c6c6"/><rect x="46" y="1398.9" width="2" height="5.7" fill="#c6c6c6"/><rect x="52" y="1398.9" width="2.1" height="3.1" fill="#c6c6c6"/><rect x="27.7" y="1411.1" width="4.3" height="2" fill="#c6c6c6"/><rect x="27.7" y="1417" width="6.3" height="2.2" fill="#c6c6c6"/><rect x="30.8" y="1457.8" width="20.5" height="20.3" fill="#808080" stroke="#c6c6c6" stroke-width="2"/><rect x="38.9" y="1467.8" width="8.4" height="6.2" fill="none" stroke="#c6c6c6" stroke-width="1.5"/><rect x="34.5" y="1463.5" width="8.8" height="6.2" fill="#333" stroke="#c6c6c6" stroke-width="1.5"/><path d="M65.2 1480.8 L65.2 1488 L58.2 1488 Z" fill="#c6c6c6"/></svg>
<div class="t" style="left:49.6px;top:1290.85px;font-size:25.5px;line-height:25.5px;color:#c6c6c6;white-space:nowrap;font-weight:bold;font-family:'Liberation Serif',serif;-webkit-text-stroke:0;">T</div>
<div style="left:0px;top:0px;width:1.8px;height:1595px;background:#3b3b3b;"></div>
<div style="left:2878.2px;top:0px;width:1.8px;height:1595px;background:#3b3b3b;"></div>
<div style="left:0px;top:1593.6px;width:2880px;height:1.4px;background:#2e2e2e;"></div>
</div><div style="position:absolute;left:0;top:1595px;width:2880px;height:1.6px;background:#060606"></div></body></html>
